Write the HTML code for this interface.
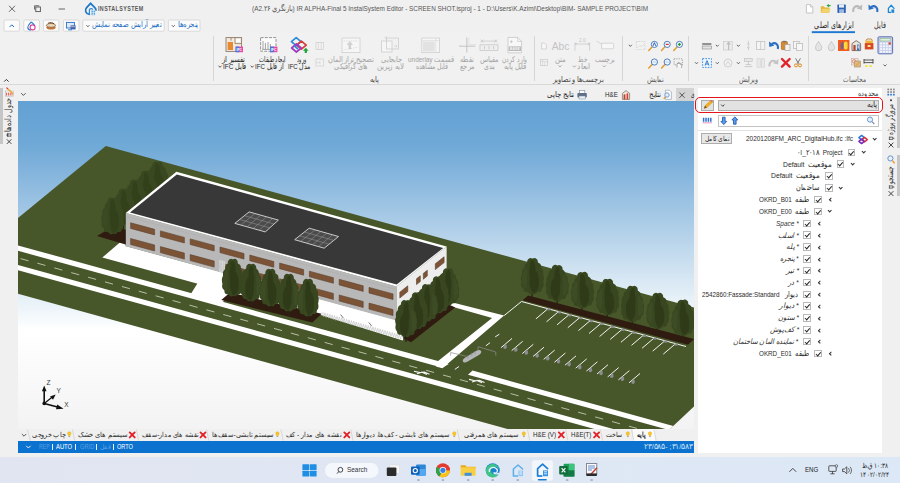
<!DOCTYPE html>
<html lang="fa">
<head>
<meta charset="utf-8">
<title>InstalSystem Editor</title>
<style>
*{box-sizing:border-box;margin:0;padding:0}
html,body{width:900px;height:483px;overflow:hidden;background:#f0f0f0}
body{font-family:"Liberation Sans",sans-serif;font-size:8px;color:#333;position:relative}
.abs{position:absolute}
.t{position:absolute;white-space:nowrap;line-height:1}
.rtl{direction:rtl;unicode-bidi:isolate}
.f{transform-origin:0 0;display:inline-block}
#titlebar{left:0;top:0;width:900px;height:18px;background:#f0f0f0}
#row2{left:0;top:18px;width:900px;height:15px;background:#f0f0f0}
#ribbon{left:0;top:33px;width:900px;height:51px;background:#f1f1f1}
#ribline{left:0;top:84px;width:900px;height:1px;background:#d9d9d9}
#tabrow{left:0;top:85px;width:697px;height:16px;background:#f0f0f0}
#leftstrip{left:0;top:85px;width:18px;height:372px;background:#f0f0f0}
#leftedge{left:0;top:88px;width:3px;height:33px;background:#c9c9c9}
#rpanel{left:697.5px;top:88.4px;width:184px;height:364.8px;background:#fff}
#rstrip{left:881.5px;top:85px;width:18.5px;height:372px;background:#f0f0f0}
#btabs{left:18px;top:429px;width:676px;height:12px;background:#f0f0f0}
#status{left:18px;top:440.6px;width:676px;height:12.8px;background:#0b73cf}
#taskbar{left:0;top:457px;width:900px;height:26px;background:linear-gradient(90deg,#e1e5f1,#dfe7f4 60%,#dce8f6)}
.qb{position:absolute;top:20px;height:12px;border:1px solid #d3d3d3;background:#fbfbfb;border-radius:1px}
.blue{color:#1b6ec2}
.sep{position:absolute;top:36px;width:1px;height:45px;background:#d6d6d6}
.gl{position:absolute;top:75.5px;font-size:7.5px;color:#555;white-space:nowrap;line-height:1;direction:rtl}
.rl{position:absolute;font-size:7.5px;line-height:7.5px;color:#9a9a9a;text-align:center;white-space:nowrap;direction:rtl}
.rl.on{color:#222}
.row{position:absolute;right:0;height:12px;white-space:nowrap;font-size:7.6px;line-height:12px;color:#2a2a2a}
.cb{position:absolute;width:7.6px;height:7.6px;border:1px solid #b9b9b9;background:#fff}
.cb:after{content:"";position:absolute;left:1.7px;top:0px;width:1.8px;height:3.6px;border:solid #222;border-width:0 1px 1px 0;transform:rotate(42deg)}
.car{position:absolute;width:3.4px;height:3.4px;border:solid #333;border-width:0 0.9px 0.9px 0}
.car.d{transform:rotate(45deg)}
.car.r{transform:rotate(135deg)}
.lbl{position:absolute;white-space:nowrap;font-size:7.6px;line-height:10px;color:#2a2a2a}
.bt{position:absolute;top:430.5px;height:10px;font-size:7.4px;line-height:10px;color:#2a2a2a;white-space:nowrap;direction:rtl}
.bsep{position:absolute;top:430px;width:1px;height:10px;background:#cfcfcf}
</style>
</head>
<body>
<div class="abs" id="titlebar"></div>
<div class="abs" id="row2"></div>
<div class="abs" id="ribbon"></div>
<div class="abs" id="ribline"></div>
<div class="abs" id="tabrow"></div>
<div class="abs" id="leftstrip"></div>
<div class="abs" id="leftedge"></div>
<div class="abs" id="rstrip"></div>
<div class="abs" id="rpanel"></div>
<div class="abs" id="btabs"></div>
<div class="abs" id="status"></div>
<div class="abs" id="taskbar"></div>
<svg id="scene" width="900" height="483" viewBox="0 0 900 483" style="position:absolute;left:0;top:0"><defs><linearGradient id="sky" x1="0" y1="101" x2="0" y2="429" gradientUnits="userSpaceOnUse"><stop offset="0" stop-color="#64a1d3"/><stop offset="0.08" stop-color="#69a5d5"/><stop offset="0.14" stop-color="#71aad7"/><stop offset="0.195" stop-color="#7eb1db"/><stop offset="0.30" stop-color="#99c1e2"/><stop offset="0.454" stop-color="#c0d9ed"/><stop offset="0.607" stop-color="#e7f1f8"/><stop offset="0.70" stop-color="#ffffff"/><stop offset="1" stop-color="#f3f3f3"/></linearGradient><clipPath id="vp"><rect x="18" y="101" width="676" height="328"/></clipPath></defs><rect x="18" y="101" width="676" height="328" fill="url(#sky)"/><g clip-path="url(#vp)"><polygon points="105.8,146.1 694,307.6 694,406.5 670,429 507.5,429 18,293.7 18,218" fill="#48572a"/><polygon points="18,265 700,452.9 700,458.1 18,270.2" fill="#ffffff"/><polygon points="18,245.4 448.8,364.1 442.4,367.7 18,250.8" fill="#ffffff"/><polygon points="472.5,370.6 673.3,425.9 669,430 468,374.8" fill="#ffffff"/><path d="M20.5 258.6L28.5 260.8M37.4 263.2L45.4 265.4M54.3 267.9L62.3 270.1M71.2 272.6L79.2 274.8M88.1 277.2L96.1 279.4M105 281.9L113 284.1M121.9 286.5L129.9 288.7M138.8 291.2L146.8 293.4M155.7 295.8L163.7 298M172.6 300.5L180.6 302.7M189.5 305.1L197.5 307.4M206.4 309.8L214.4 312M223.3 314.5L231.3 316.7M240.2 319.1L248.2 321.3M257.1 323.8L265.1 326M274 328.4L282 330.6M290.9 333.1L298.9 335.3M307.8 337.7L315.8 339.9M324.7 342.4L332.7 344.6M341.6 347.1L349.6 349.3M358.5 351.7L366.5 353.9M375.4 356.4L383.4 358.6M392.3 361L400.3 363.2M409.2 365.7L417.2 367.9M426.1 370.3L434.1 372.5M443 375L451 377.2M459.9 379.6L467.9 381.8M476.8 384.3L484.8 386.5M493.7 389L501.7 391.2M510.6 393.6L518.6 395.8M527.5 398.3L535.5 400.5M544.4 402.9L552.4 405.1M561.3 407.6L569.3 409.8M578.2 412.2L586.2 414.4M595.1 416.9L603.1 419.1M612 421.5L620 423.8M628.9 426.2L636.9 428.4M645.8 430.9L653.8 433.1M662.7 435.5L670.7 437.7M679.6 440.2L687.6 442.4" stroke="#d3d9c4" stroke-width="0.8" fill="none"/><polygon points="102.3,257.6 119.5,242.7 125.6,239.9 125.6,246 397,320.1 412,312 402.7,340.4 321.7,315.2 230,292.6 199.6,284.2" fill="#ffffff"/><polygon points="198,282.5 232,291.5 222,303 190.5,294.5" fill="#ffffff"/><polygon points="449.7,301.7 504.1,315.6 442.4,368.3 436,366.6 438.1,361.1 492.1,317.9 449.7,305.9" fill="#ffffff"/><path d="M504.1 315.6L521.5 301.5L686 346.5" stroke="#f4f4f0" stroke-width="1" fill="none"/><path d="M535.9 318.9l11.8 -10M546.5 321.8l11.8 -10M557.1 324.8l11.8 -10M567.8 327.7l11.8 -10M578.4 330.6l11.8 -10M589 333.5l11.8 -10M599.6 336.5l11.8 -10M610.2 339.4l11.8 -10M620.9 342.3l11.8 -10M631.5 345.3l11.8 -10M642.1 348.2l11.8 -10M652.7 351.1l11.8 -10M663.3 354.1l11.8 -10M501 347.7l11 -9.3M511.7 350.6l11 -9.3M522.3 353.6l11 -9.3M533 356.5l11 -9.3M543.7 359.4l11 -9.3M554.4 362.3l11 -9.3M565 365.2l11 -9.3M575.7 368.2l11 -9.3M586.4 371.1l11 -9.3M597 374l11 -9.3M607.7 376.9l11 -9.3M618.4 379.9l11 -9.3M629 382.8l11 -9.3" stroke="#f2f2ee" stroke-width="1" fill="none"/><g fill="#8b8d92"><path d="M503.4 346.7l1.6 -2.4l1.5 .5l.4 2.6l-1.3 1.5l-1.9 -.4z"/><path d="M514.1 349.6l1.6 -2.4l1.5 .5l.4 2.6l-1.3 1.5l-1.9 -.4z"/><path d="M524.7 352.6l1.6 -2.4l1.5 .5l.4 2.6l-1.3 1.5l-1.9 -.4z"/><path d="M535.4 355.5l1.6 -2.4l1.5 .5l.4 2.6l-1.3 1.5l-1.9 -.4z"/><path d="M546.1 358.4l1.6 -2.4l1.5 .5l.4 2.6l-1.3 1.5l-1.9 -.4z"/><path d="M556.8 361.3l1.6 -2.4l1.5 .5l.4 2.6l-1.3 1.5l-1.9 -.4z"/><path d="M567.4 364.2l1.6 -2.4l1.5 .5l.4 2.6l-1.3 1.5l-1.9 -.4z"/><path d="M578.1 367.2l1.6 -2.4l1.5 .5l.4 2.6l-1.3 1.5l-1.9 -.4z"/><path d="M588.8 370.1l1.6 -2.4l1.5 .5l.4 2.6l-1.3 1.5l-1.9 -.4z"/><path d="M599.4 373l1.6 -2.4l1.5 .5l.4 2.6l-1.3 1.5l-1.9 -.4z"/><path d="M610.1 375.9l1.6 -2.4l1.5 .5l.4 2.6l-1.3 1.5l-1.9 -.4z"/><path d="M620.8 378.9l1.6 -2.4l1.5 .5l.4 2.6l-1.3 1.5l-1.9 -.4z"/><path d="M631.4 381.8l1.6 -2.4l1.5 .5l.4 2.6l-1.3 1.5l-1.9 -.4z"/><ellipse cx="548.9" cy="309.3" rx="1.8" ry="1.2"/><ellipse cx="559.5" cy="312.2" rx="1.8" ry="1.2"/><ellipse cx="570.1" cy="315.2" rx="1.8" ry="1.2"/><ellipse cx="580.8" cy="318.1" rx="1.8" ry="1.2"/><ellipse cx="591.4" cy="321" rx="1.8" ry="1.2"/><ellipse cx="602" cy="323.9" rx="1.8" ry="1.2"/><ellipse cx="612.6" cy="326.9" rx="1.8" ry="1.2"/><ellipse cx="623.2" cy="329.8" rx="1.8" ry="1.2"/><ellipse cx="633.9" cy="332.7" rx="1.8" ry="1.2"/><ellipse cx="644.5" cy="335.7" rx="1.8" ry="1.2"/><ellipse cx="655.1" cy="338.6" rx="1.8" ry="1.2"/><ellipse cx="665.7" cy="341.5" rx="1.8" ry="1.2"/><ellipse cx="676.3" cy="344.5" rx="1.8" ry="1.2"/></g><path d="M454.8 369.4L459 366.5M485.9 345.8L490 342.7M495.2 336.9L499.4 334.2M465 361.5L469 358.6" stroke="#eef0ea" stroke-width="1" fill="none"/><polygon points="97,236 113,226.5 168,241 125.6,244.5" fill="#2f1b10"/><path d="M157 195.6v8" stroke="#2a2313" stroke-width="1.3"/><path d="M158.4 161.7Q159.5 161.2 160.5 161.7Q161.6 162.2 162.2 163.2Q162.8 164.2 162.7 165.2Q162.6 166.3 163.7 166.7Q164.7 167.1 165.4 168.2Q166.1 169.3 166 170.5Q165.9 171.7 166.7 172.4Q167.5 173.2 167.9 174.5Q168.3 175.8 168 177Q167.7 178.2 168.3 179.2Q168.8 180.3 168.7 181.9Q168.6 183.5 168.3 184.6Q167.9 185.7 168.3 186.8Q168.6 188 168.4 189.5Q168.1 191 167.3 191.8Q166.5 192.6 166.6 193.6Q166.7 194.6 165.6 195.4Q164.5 196.1 163.5 195.9Q162.4 195.7 161.9 196.7Q161.4 197.7 160.2 198Q159.1 198.3 158.5 197.8Q157.9 197.3 157 198Q156.1 198.7 155.1 198.1Q154 197.5 153.4 196.7Q152.8 195.9 151.6 196.1Q150.5 196.3 149.6 195.4Q148.7 194.4 148.8 193.3Q148.9 192.2 147.9 191.6Q146.9 191 146.5 189.6Q146.1 188.2 146.5 186.8Q146.9 185.5 146.4 184.4Q146 183.3 146.1 181.6Q146.3 179.8 146.9 178.8Q147.5 177.8 147.2 176.6Q146.9 175.4 147.5 174.1Q148.1 172.8 148.9 172.2Q149.7 171.7 149.6 170.4Q149.5 169.1 150.3 168.1Q151 167.1 151.7 166.8Q152.4 166.5 152.3 165.2Q152.2 164 153 163.1Q153.8 162.2 154.8 161.8Q155.7 161.4 156.5 161.8Q157.3 162.2 158.4 161.7Z" fill="#394820"/><path d="M151.4 170.7Q147 175.8 146.7 183.9Q147.5 191 151.4 193Q152.9 185.9 151.9 179.8Q153.4 173.8 151.4 170.7Z" fill="#3b4a22"/><path d="M157.3 163.1Q160.8 166.7 160.2 173.8Q164.6 178.8 163.7 188Q164.1 194 158.3 197.6Q153.9 192 154.9 183.9Q153.6 174.8 155.3 168.7Q154.4 164.6 157.3 163.1Z" fill="#33411b"/><path d="M145.8 204.6v8" stroke="#2a2313" stroke-width="1.3"/><path d="M147.2 170.7Q148.3 170.2 149.3 170.7Q150.4 171.2 151 172.2Q151.6 173.2 151.5 174.2Q151.4 175.3 152.5 175.7Q153.5 176.1 154.2 177.2Q154.9 178.3 154.8 179.5Q154.7 180.7 155.5 181.4Q156.3 182.2 156.7 183.5Q157.1 184.8 156.8 186Q156.5 187.2 157.1 188.2Q157.6 189.3 157.5 190.9Q157.4 192.5 157.1 193.6Q156.7 194.7 157.1 195.8Q157.4 197 157.2 198.5Q156.9 200 156.1 200.8Q155.3 201.6 155.4 202.6Q155.5 203.6 154.4 204.4Q153.3 205.1 152.3 204.9Q151.2 204.7 150.7 205.7Q150.2 206.7 149 207Q147.9 207.3 147.3 206.8Q146.7 206.3 145.8 207Q144.9 207.7 143.8 207.1Q142.8 206.5 142.2 205.7Q141.6 204.9 140.4 205.1Q139.3 205.3 138.4 204.4Q137.5 203.4 137.6 202.3Q137.7 201.2 136.7 200.6Q135.7 200 135.3 198.6Q134.9 197.2 135.3 195.8Q135.7 194.5 135.2 193.4Q134.8 192.3 134.9 190.6Q135.1 188.8 135.7 187.8Q136.3 186.8 136 185.6Q135.7 184.4 136.3 183.1Q136.9 181.8 137.7 181.2Q138.5 180.7 138.4 179.4Q138.3 178.1 139.1 177.1Q139.8 176.1 140.5 175.8Q141.2 175.5 141.1 174.2Q141 173 141.8 172.1Q142.6 171.2 143.6 170.8Q144.5 170.4 145.3 170.8Q146.1 171.2 147.2 170.7Z" fill="#394820"/><path d="M140.2 179.7Q135.8 184.8 135.5 192.9Q136.3 200 140.2 202Q141.7 194.9 140.7 188.8Q142.2 182.8 140.2 179.7Z" fill="#3b4a22"/><path d="M146.1 172.1Q149.6 175.7 149 182.8Q153.4 187.8 152.5 197Q152.9 203 147.1 206.6Q142.7 201 143.7 192.9Q142.4 183.8 144.1 177.7Q143.2 173.6 146.1 172.1Z" fill="#33411b"/><path d="M134.6 213.6v8" stroke="#2a2313" stroke-width="1.3"/><path d="M136 179.7Q137.1 179.2 138.1 179.7Q139.2 180.2 139.8 181.2Q140.4 182.2 140.3 183.2Q140.2 184.3 141.3 184.7Q142.3 185.1 143 186.2Q143.7 187.3 143.6 188.5Q143.5 189.7 144.3 190.4Q145.1 191.2 145.5 192.5Q145.9 193.8 145.6 195Q145.3 196.2 145.9 197.2Q146.4 198.3 146.3 199.9Q146.2 201.5 145.9 202.6Q145.5 203.7 145.9 204.8Q146.2 206 146 207.5Q145.7 209 144.9 209.8Q144.1 210.6 144.2 211.6Q144.3 212.6 143.2 213.4Q142.1 214.1 141.1 213.9Q140 213.7 139.5 214.7Q139 215.7 137.8 216Q136.7 216.3 136.1 215.8Q135.5 215.3 134.6 216Q133.7 216.7 132.7 216.1Q131.6 215.5 131 214.7Q130.4 213.9 129.2 214.1Q128.1 214.3 127.2 213.4Q126.3 212.4 126.4 211.3Q126.5 210.2 125.5 209.6Q124.5 209 124.1 207.6Q123.7 206.2 124.1 204.8Q124.5 203.5 124 202.4Q123.6 201.3 123.7 199.6Q123.9 197.8 124.5 196.8Q125.1 195.8 124.8 194.6Q124.5 193.4 125.1 192.1Q125.7 190.8 126.5 190.2Q127.3 189.7 127.2 188.4Q127.1 187.1 127.9 186.1Q128.6 185.1 129.3 184.8Q130 184.5 129.9 183.2Q129.8 182 130.6 181.1Q131.4 180.2 132.4 179.8Q133.3 179.4 134.1 179.8Q134.9 180.2 136 179.7Z" fill="#394820"/><path d="M129 188.7Q124.6 193.8 124.3 201.9Q125.1 209 129 211Q130.5 203.9 129.5 197.8Q131 191.8 129 188.7Z" fill="#3b4a22"/><path d="M134.9 181.1Q138.4 184.7 137.8 191.8Q142.2 196.8 141.3 206Q141.7 212 135.9 215.6Q131.5 210 132.5 201.9Q131.2 192.8 132.9 186.7Q132 182.6 134.9 181.1Z" fill="#33411b"/><path d="M123.4 222.6v8" stroke="#2a2313" stroke-width="1.3"/><path d="M124.8 188.7Q125.9 188.2 126.9 188.7Q128 189.2 128.6 190.2Q129.2 191.2 129.1 192.2Q129 193.3 130.1 193.7Q131.1 194.1 131.8 195.2Q132.5 196.3 132.4 197.5Q132.3 198.7 133.1 199.4Q133.9 200.2 134.3 201.5Q134.7 202.8 134.4 204Q134.1 205.2 134.7 206.2Q135.2 207.3 135.1 208.9Q135 210.5 134.7 211.6Q134.3 212.7 134.7 213.8Q135 215 134.8 216.5Q134.5 218 133.7 218.8Q132.9 219.6 133 220.6Q133.1 221.6 132 222.4Q130.9 223.1 129.9 222.9Q128.8 222.7 128.3 223.7Q127.8 224.7 126.6 225Q125.5 225.3 124.9 224.8Q124.3 224.3 123.4 225Q122.5 225.7 121.5 225.1Q120.4 224.5 119.8 223.7Q119.2 222.9 118 223.1Q116.9 223.3 116 222.4Q115.1 221.4 115.2 220.3Q115.3 219.2 114.3 218.6Q113.3 218 112.9 216.6Q112.5 215.2 112.9 213.8Q113.3 212.5 112.8 211.4Q112.4 210.3 112.5 208.6Q112.7 206.8 113.3 205.8Q113.9 204.8 113.6 203.6Q113.3 202.4 113.9 201.1Q114.5 199.8 115.3 199.2Q116.1 198.7 116 197.4Q115.9 196.1 116.7 195.1Q117.4 194.1 118.1 193.8Q118.8 193.5 118.7 192.2Q118.6 191 119.4 190.1Q120.2 189.2 121.2 188.8Q122.1 188.4 122.9 188.8Q123.7 189.2 124.8 188.7Z" fill="#394820"/><path d="M117.8 197.7Q113.4 202.8 113.1 210.9Q113.9 218 117.8 220Q119.3 212.9 118.3 206.8Q119.8 200.8 117.8 197.7Z" fill="#3b4a22"/><path d="M123.7 190.1Q127.2 193.7 126.6 200.8Q131 205.8 130.1 215Q130.5 221 124.7 224.6Q120.3 219 121.3 210.9Q120 201.8 121.7 195.7Q120.8 191.6 123.7 190.1Z" fill="#33411b"/><path d="M112.2 231.6v8" stroke="#2a2313" stroke-width="1.3"/><path d="M113.6 197.7Q114.7 197.2 115.7 197.7Q116.8 198.2 117.4 199.2Q118 200.2 117.9 201.2Q117.8 202.3 118.9 202.7Q119.9 203.1 120.6 204.2Q121.3 205.3 121.2 206.5Q121.1 207.7 121.9 208.4Q122.7 209.2 123.1 210.5Q123.5 211.8 123.2 213Q122.9 214.2 123.5 215.2Q124 216.3 123.9 217.9Q123.8 219.5 123.5 220.6Q123.1 221.7 123.5 222.8Q123.8 224 123.6 225.5Q123.3 227 122.5 227.8Q121.7 228.6 121.8 229.6Q121.9 230.6 120.8 231.4Q119.7 232.1 118.7 231.9Q117.6 231.7 117.1 232.7Q116.6 233.7 115.4 234Q114.3 234.3 113.7 233.8Q113.1 233.3 112.2 234Q111.3 234.7 110.2 234.1Q109.2 233.5 108.6 232.7Q108 231.9 106.8 232.1Q105.7 232.3 104.8 231.4Q103.9 230.4 104 229.3Q104.1 228.2 103.1 227.6Q102.1 227 101.7 225.6Q101.3 224.2 101.7 222.8Q102.1 221.5 101.6 220.4Q101.2 219.3 101.3 217.6Q101.5 215.8 102.1 214.8Q102.7 213.8 102.4 212.6Q102.1 211.4 102.7 210.1Q103.3 208.8 104.1 208.2Q104.9 207.7 104.8 206.4Q104.7 205.1 105.5 204.1Q106.2 203.1 106.9 202.8Q107.6 202.5 107.5 201.2Q107.4 200 108.2 199.1Q109 198.2 110 197.8Q110.9 197.4 111.7 197.8Q112.5 198.2 113.6 197.7Z" fill="#394820"/><path d="M106.6 206.7Q102.2 211.8 101.9 219.9Q102.7 227 106.6 229Q108.1 221.9 107.1 215.8Q108.6 209.8 106.6 206.7Z" fill="#3b4a22"/><path d="M112.5 199.1Q116 202.7 115.4 209.8Q119.8 214.8 118.9 224Q119.3 230 113.5 233.6Q109.1 228 110.1 219.9Q108.8 210.8 110.5 204.7Q109.6 200.6 112.5 199.1Z" fill="#33411b"/><polygon points="522.6,300.2 528.1,295.6 694.2,339 688,344.8" fill="#2f1b10"/><path d="M532 291.6v8" stroke="#2a2313" stroke-width="1.3"/><path d="M533.4 258.2Q534.5 257.7 535.6 258.2Q536.7 258.7 537.3 259.7Q537.9 260.7 537.8 261.7Q537.7 262.7 538.8 263.1Q539.9 263.5 540.6 264.6Q541.3 265.7 541.2 266.9Q541.1 268.1 541.9 268.8Q542.7 269.5 543.1 270.8Q543.5 272.1 543.2 273.3Q542.9 274.5 543.5 275.5Q544.1 276.5 544 278.1Q543.9 279.7 543.5 280.8Q543.1 281.9 543.5 283Q543.9 284.1 543.6 285.6Q543.3 287.1 542.5 287.9Q541.7 288.7 541.8 289.7Q541.9 290.7 540.8 291.4Q539.7 292.1 538.6 291.9Q537.5 291.7 537 292.7Q536.5 293.7 535.3 294Q534.1 294.3 533.5 293.8Q532.9 293.3 532 294Q531.1 294.7 530 294.1Q528.9 293.5 528.3 292.7Q527.7 291.9 526.5 292.1Q525.3 292.3 524.4 291.4Q523.5 290.5 523.6 289.4Q523.7 288.3 522.7 287.7Q521.7 287.1 521.3 285.7Q520.9 284.3 521.3 283Q521.7 281.7 521.2 280.6Q520.7 279.5 520.9 277.8Q521.1 276.1 521.7 275.1Q522.3 274.1 522 272.9Q521.7 271.7 522.3 270.4Q522.9 269.1 523.7 268.6Q524.5 268.1 524.4 266.8Q524.3 265.5 525.1 264.5Q525.9 263.5 526.6 263.2Q527.3 262.9 527.2 261.7Q527.1 260.5 527.9 259.6Q528.7 258.7 529.7 258.3Q530.7 257.9 531.5 258.3Q532.3 258.7 533.4 258.2Z" fill="#384720"/><path d="M526.3 267.1Q521.8 272.1 521.5 280.1Q522.3 287.1 526.3 289.1Q527.8 282.1 526.8 276.1Q528.3 270.1 526.3 267.1Z" fill="#3d4c25"/><path d="M532.3 259.6Q535.9 263.1 535.3 270.1Q539.8 275.1 538.8 284.1Q539.3 290.1 533.3 293.6Q528.8 288.1 529.8 280.1Q528.5 271.1 530.3 265.1Q529.3 261.1 532.3 259.6Z" fill="#2f3b18"/><path d="M557.1 298.5v8" stroke="#2a2313" stroke-width="1.3"/><path d="M556.3 265.1Q555.2 264.6 554.1 265.1Q553 265.6 552.4 266.6Q551.8 267.6 551.9 268.6Q552 269.6 550.9 270Q549.8 270.4 549.1 271.5Q548.4 272.6 548.5 273.8Q548.6 275 547.8 275.7Q547 276.4 546.6 277.7Q546.2 279 546.5 280.2Q546.8 281.4 546.2 282.4Q545.6 283.4 545.7 285Q545.8 286.6 546.2 287.7Q546.6 288.8 546.2 289.9Q545.8 291 546.1 292.5Q546.4 294 547.2 294.8Q548 295.6 547.9 296.6Q547.8 297.6 548.9 298.3Q550 299 551.1 298.8Q552.2 298.6 552.7 299.6Q553.2 300.6 554.4 300.9Q555.6 301.2 556.2 300.7Q556.8 300.2 557.7 300.9Q558.6 301.6 559.7 301Q560.8 300.4 561.4 299.6Q562 298.8 563.2 299Q564.4 299.2 565.3 298.3Q566.2 297.4 566.1 296.3Q566 295.2 567 294.6Q568 294 568.4 292.6Q568.8 291.2 568.4 289.9Q568 288.6 568.5 287.5Q569 286.4 568.8 284.7Q568.6 283 568 282Q567.4 281 567.7 279.8Q568 278.6 567.4 277.3Q566.8 276 566 275.5Q565.2 275 565.3 273.7Q565.4 272.4 564.6 271.4Q563.8 270.4 563.1 270.1Q562.4 269.8 562.5 268.6Q562.6 267.4 561.8 266.5Q561 265.6 560 265.2Q559 264.8 558.2 265.2Q557.4 265.6 556.3 265.1Z" fill="#384720"/><path d="M563.4 274Q567.9 279 568.2 287Q567.4 294 563.4 296Q561.9 289 562.9 283Q561.4 277 563.4 274Z" fill="#3d4c25"/><path d="M557.4 266.5Q553.8 270 554.4 277Q549.9 282 550.9 291Q550.4 297 556.4 300.5Q560.9 295 559.9 287Q561.2 278 559.4 272Q560.4 268 557.4 266.5Z" fill="#2f3b18"/><path d="M582.1 305.5v8" stroke="#2a2313" stroke-width="1.3"/><path d="M583.5 272.1Q584.6 271.6 585.7 272.1Q586.8 272.6 587.4 273.6Q588 274.6 587.9 275.6Q587.8 276.6 588.9 277Q590 277.4 590.7 278.5Q591.4 279.6 591.3 280.8Q591.2 282 592 282.7Q592.8 283.4 593.2 284.7Q593.6 286 593.3 287.2Q593 288.4 593.6 289.4Q594.2 290.4 594.1 292Q594 293.6 593.6 294.7Q593.2 295.8 593.6 296.9Q594 298 593.7 299.5Q593.4 301 592.6 301.8Q591.8 302.6 591.9 303.6Q592 304.6 590.9 305.3Q589.8 306 588.7 305.8Q587.6 305.6 587.1 306.6Q586.6 307.6 585.4 307.9Q584.2 308.2 583.6 307.7Q583 307.2 582.1 307.9Q581.2 308.6 580.1 308Q579 307.4 578.4 306.6Q577.8 305.8 576.6 306Q575.4 306.2 574.5 305.3Q573.6 304.4 573.7 303.3Q573.8 302.2 572.8 301.6Q571.8 301 571.4 299.6Q571 298.2 571.4 296.9Q571.8 295.6 571.3 294.5Q570.8 293.4 571 291.7Q571.2 290 571.8 289Q572.4 288 572.1 286.8Q571.8 285.6 572.4 284.3Q573 283 573.8 282.5Q574.6 282 574.5 280.7Q574.4 279.4 575.2 278.4Q576 277.4 576.7 277.1Q577.4 276.8 577.3 275.6Q577.2 274.4 578 273.5Q578.8 272.6 579.8 272.2Q580.8 271.8 581.6 272.2Q582.4 272.6 583.5 272.1Z" fill="#384720"/><path d="M576.4 281Q571.9 286 571.6 294Q572.4 301 576.4 303Q577.9 296 576.9 290Q578.4 284 576.4 281Z" fill="#3d4c25"/><path d="M582.4 273.5Q586 277 585.4 284Q589.9 289 588.9 298Q589.4 304 583.4 307.5Q578.9 302 579.9 294Q578.6 285 580.4 279Q579.4 275 582.4 273.5Z" fill="#2f3b18"/><path d="M607.2 312.4v8" stroke="#2a2313" stroke-width="1.3"/><path d="M608.6 279Q609.7 278.5 610.8 279Q611.9 279.5 612.5 280.5Q613.1 281.5 613 282.5Q612.9 283.5 614 283.9Q615.1 284.3 615.8 285.4Q616.5 286.5 616.4 287.7Q616.3 288.9 617.1 289.6Q617.9 290.3 618.3 291.6Q618.7 292.9 618.4 294.1Q618.1 295.3 618.7 296.3Q619.3 297.3 619.2 298.9Q619.1 300.5 618.7 301.6Q618.3 302.7 618.7 303.8Q619.1 304.9 618.8 306.4Q618.5 307.9 617.7 308.7Q616.9 309.5 617 310.5Q617.1 311.5 616 312.2Q614.9 312.9 613.8 312.7Q612.7 312.5 612.2 313.5Q611.7 314.5 610.5 314.8Q609.3 315.1 608.7 314.6Q608.1 314.1 607.2 314.8Q606.3 315.5 605.2 314.9Q604.1 314.3 603.5 313.5Q602.9 312.7 601.7 312.9Q600.5 313.1 599.6 312.2Q598.7 311.3 598.8 310.2Q598.9 309.1 597.9 308.5Q596.9 307.9 596.5 306.5Q596.1 305.1 596.5 303.8Q596.9 302.5 596.4 301.4Q595.9 300.3 596.1 298.6Q596.3 296.9 596.9 295.9Q597.5 294.9 597.2 293.7Q596.9 292.5 597.5 291.2Q598.1 289.9 598.9 289.4Q599.7 288.9 599.6 287.6Q599.5 286.3 600.3 285.3Q601.1 284.3 601.8 284Q602.5 283.7 602.4 282.5Q602.3 281.3 603.1 280.4Q603.9 279.5 604.9 279.1Q605.9 278.7 606.7 279.1Q607.5 279.5 608.6 279Z" fill="#384720"/><path d="M601.5 287.9Q597 292.9 596.7 300.9Q597.5 307.9 601.5 309.9Q603 302.9 602 296.9Q603.5 290.9 601.5 287.9Z" fill="#3d4c25"/><path d="M607.5 280.4Q611.1 283.9 610.5 290.9Q615 295.9 614 304.9Q614.5 310.9 608.5 314.4Q604 308.9 605 300.9Q603.7 291.9 605.5 285.9Q604.5 281.9 607.5 280.4Z" fill="#2f3b18"/><path d="M632.3 319.3v8" stroke="#2a2313" stroke-width="1.3"/><path d="M631.5 285.9Q630.4 285.4 629.3 285.9Q628.2 286.4 627.6 287.4Q627 288.4 627.1 289.4Q627.2 290.4 626.1 290.8Q625 291.2 624.3 292.3Q623.6 293.4 623.7 294.6Q623.8 295.8 623 296.5Q622.2 297.2 621.8 298.5Q621.4 299.8 621.7 301Q622 302.2 621.4 303.2Q620.8 304.2 620.9 305.8Q621 307.4 621.4 308.5Q621.8 309.6 621.4 310.7Q621 311.8 621.3 313.3Q621.6 314.8 622.4 315.6Q623.2 316.4 623.1 317.4Q623 318.4 624.1 319.1Q625.2 319.8 626.3 319.6Q627.4 319.4 627.9 320.4Q628.4 321.4 629.6 321.7Q630.8 322 631.4 321.5Q632 321 632.9 321.7Q633.8 322.4 634.9 321.8Q636 321.2 636.6 320.4Q637.2 319.6 638.4 319.8Q639.6 320 640.5 319.1Q641.4 318.2 641.3 317.1Q641.2 316 642.2 315.4Q643.2 314.8 643.6 313.4Q644 312 643.6 310.7Q643.2 309.4 643.7 308.3Q644.2 307.2 644 305.5Q643.8 303.8 643.2 302.8Q642.6 301.8 642.9 300.6Q643.2 299.4 642.6 298.1Q642 296.8 641.2 296.3Q640.4 295.8 640.5 294.5Q640.6 293.2 639.8 292.2Q639 291.2 638.3 290.9Q637.6 290.6 637.7 289.4Q637.8 288.2 637 287.3Q636.2 286.4 635.2 286Q634.2 285.6 633.4 286Q632.6 286.4 631.5 285.9Z" fill="#384720"/><path d="M638.6 294.8Q643.1 299.8 643.4 307.8Q642.6 314.8 638.6 316.8Q637.1 309.8 638.1 303.8Q636.6 297.8 638.6 294.8Z" fill="#3d4c25"/><path d="M632.6 287.3Q629 290.8 629.6 297.8Q625.1 302.8 626.1 311.8Q625.6 317.8 631.6 321.3Q636.1 315.8 635.1 307.8Q636.4 298.8 634.6 292.8Q635.6 288.8 632.6 287.3Z" fill="#2f3b18"/><path d="M657.4 326.2v8" stroke="#2a2313" stroke-width="1.3"/><path d="M658.8 292.9Q659.9 292.4 660.9 292.9Q662 293.4 662.6 294.4Q663.2 295.4 663.1 296.4Q663 297.4 664.1 297.8Q665.2 298.1 665.9 299.2Q666.6 300.4 666.5 301.6Q666.4 302.8 667.2 303.4Q668 304.1 668.4 305.4Q668.9 306.8 668.5 307.9Q668.2 309.1 668.9 310.1Q669.4 311.1 669.4 312.8Q669.2 314.4 668.9 315.4Q668.4 316.6 668.9 317.6Q669.2 318.8 668.9 320.2Q668.6 321.8 667.9 322.6Q667 323.4 667.1 324.4Q667.2 325.4 666.1 326.1Q665 326.8 663.9 326.6Q662.9 326.4 662.4 327.4Q661.9 328.4 660.6 328.6Q659.4 328.9 658.9 328.4Q658.2 327.9 657.4 328.6Q656.4 329.4 655.4 328.8Q654.2 328.1 653.6 327.4Q653 326.6 651.9 326.8Q650.6 326.9 649.8 326.1Q648.9 325.1 648.9 324.1Q649 322.9 648 322.4Q647 321.8 646.6 320.4Q646.2 318.9 646.6 317.6Q647 316.4 646.5 315.2Q646 314.1 646.2 312.4Q646.4 310.8 647 309.8Q647.6 308.8 647.4 307.6Q647 306.4 647.6 305.1Q648.2 303.8 649 303.2Q649.9 302.8 649.8 301.4Q649.6 300.1 650.4 299.1Q651.2 298.1 651.9 297.9Q652.6 297.6 652.5 296.4Q652.4 295.1 653.2 294.2Q654 293.4 655 292.9Q656 292.6 656.9 292.9Q657.6 293.4 658.8 292.9Z" fill="#384720"/><path d="M651.6 301.8Q647.1 306.8 646.9 314.8Q647.6 321.8 651.6 323.8Q653.1 316.8 652.1 310.8Q653.6 304.8 651.6 301.8Z" fill="#3d4c25"/><path d="M657.6 294.2Q661.2 297.8 660.6 304.8Q665.1 309.8 664.1 318.8Q664.6 324.8 658.6 328.2Q654.1 322.8 655.1 314.8Q653.9 305.8 655.6 299.8Q654.6 295.8 657.6 294.2Z" fill="#2f3b18"/><path d="M682.4 333.2v8" stroke="#2a2313" stroke-width="1.3"/><path d="M683.8 299.8Q684.9 299.3 686 299.8Q687.1 300.3 687.7 301.3Q688.3 302.3 688.2 303.3Q688.1 304.3 689.2 304.7Q690.3 305.1 691 306.2Q691.7 307.3 691.6 308.5Q691.5 309.7 692.3 310.4Q693.1 311.1 693.5 312.4Q693.9 313.7 693.6 314.9Q693.3 316.1 693.9 317.1Q694.5 318.1 694.4 319.7Q694.3 321.3 693.9 322.4Q693.5 323.5 693.9 324.6Q694.3 325.7 694 327.2Q693.7 328.7 692.9 329.5Q692.1 330.3 692.2 331.3Q692.3 332.3 691.2 333Q690.1 333.7 689 333.5Q687.9 333.3 687.4 334.3Q686.9 335.3 685.7 335.6Q684.5 335.9 683.9 335.4Q683.3 334.9 682.4 335.6Q681.5 336.3 680.4 335.7Q679.3 335.1 678.7 334.3Q678.1 333.5 676.9 333.7Q675.7 333.9 674.8 333Q673.9 332.1 674 331Q674.1 329.9 673.1 329.3Q672.1 328.7 671.7 327.3Q671.3 325.9 671.7 324.6Q672.1 323.3 671.6 322.2Q671.1 321.1 671.3 319.4Q671.5 317.7 672.1 316.7Q672.7 315.7 672.4 314.5Q672.1 313.3 672.7 312Q673.3 310.7 674.1 310.2Q674.9 309.7 674.8 308.4Q674.7 307.1 675.5 306.1Q676.3 305.1 677 304.8Q677.7 304.5 677.6 303.3Q677.5 302.1 678.3 301.2Q679.1 300.3 680.1 299.9Q681.1 299.5 681.9 299.9Q682.7 300.3 683.8 299.8Z" fill="#384720"/><path d="M676.7 308.7Q672.2 313.7 671.9 321.7Q672.7 328.7 676.7 330.7Q678.2 323.7 677.2 317.7Q678.7 311.7 676.7 308.7Z" fill="#3d4c25"/><path d="M682.7 301.2Q686.3 304.7 685.7 311.7Q690.2 316.7 689.2 325.7Q689.7 331.7 683.7 335.2Q679.2 329.7 680.2 321.7Q678.9 312.7 680.7 306.7Q679.7 302.7 682.7 301.2Z" fill="#2f3b18"/><polygon points="125.8,213.1 396.5,286.4 396.5,320.4 125.8,246.2" fill="#b8b8b8"/><polygon points="396.5,286.4 446.6,246.4 446.6,281 396.5,320.4" fill="#ededed"/><polygon points="130.6,222.8 154.6,229.3 154.6,234.9 130.6,228.4" fill="#7b5337" stroke="#5f412a" stroke-width="0.6"/><polygon points="130.6,238.5 154.6,245 154.6,251 130.6,244.5" fill="#7b5337" stroke="#5f412a" stroke-width="0.6"/><polygon points="160.4,230.9 184.4,237.4 184.4,243 160.4,236.5" fill="#7b5337" stroke="#5f412a" stroke-width="0.6"/><polygon points="160.4,246.6 184.4,253.1 184.4,259.1 160.4,252.6" fill="#7b5337" stroke="#5f412a" stroke-width="0.6"/><polygon points="190.2,238.9 214.2,245.4 214.2,251 190.2,244.5" fill="#7b5337" stroke="#5f412a" stroke-width="0.6"/><polygon points="190.2,254.6 214.2,261.1 214.2,267.1 190.2,260.6" fill="#7b5337" stroke="#5f412a" stroke-width="0.6"/><polygon points="220,247 244,253.5 244,259.1 220,252.6" fill="#7b5337" stroke="#5f412a" stroke-width="0.6"/><polygon points="220,262.7 244,269.2 244,275.2 220,268.7" fill="#7b5337" stroke="#5f412a" stroke-width="0.6"/><polygon points="249.8,255.1 273.8,261.6 273.8,267.2 249.8,260.7" fill="#7b5337" stroke="#5f412a" stroke-width="0.6"/><polygon points="249.8,270.8 273.8,277.3 273.8,283.3 249.8,276.8" fill="#7b5337" stroke="#5f412a" stroke-width="0.6"/><polygon points="279.6,263.1 303.6,269.6 303.6,275.2 279.6,268.7" fill="#7b5337" stroke="#5f412a" stroke-width="0.6"/><polygon points="279.6,278.8 303.6,285.3 303.6,291.3 279.6,284.8" fill="#7b5337" stroke="#5f412a" stroke-width="0.6"/><polygon points="309.4,271.2 333.4,277.7 333.4,283.3 309.4,276.8" fill="#7b5337" stroke="#5f412a" stroke-width="0.6"/><polygon points="309.4,286.9 333.4,293.4 333.4,299.4 309.4,292.9" fill="#7b5337" stroke="#5f412a" stroke-width="0.6"/><polygon points="339.2,279.3 363.2,285.8 363.2,291.4 339.2,284.9" fill="#7b5337" stroke="#5f412a" stroke-width="0.6"/><polygon points="339.2,295 363.2,301.5 363.2,307.5 339.2,301" fill="#7b5337" stroke="#5f412a" stroke-width="0.6"/><polygon points="369,287.4 393,293.9 393,299.5 369,293" fill="#7b5337" stroke="#5f412a" stroke-width="0.6"/><polygon points="369,303.1 393,309.6 393,315.6 369,309.1" fill="#7b5337" stroke="#5f412a" stroke-width="0.6"/><polygon points="399.8,292.2 407.8,285.8 407.8,291.6 399.8,298" fill="#7b5337" stroke="#5f412a" stroke-width="0.6"/><polygon points="399.8,307.9 407.8,301.5 407.8,307.5 399.8,313.9" fill="#7b5337" stroke="#5f412a" stroke-width="0.6"/><polygon points="416.5,278.8 420.3,275.8 420.3,281.6 416.5,284.6" fill="#7b5337" stroke="#5f412a" stroke-width="0.6"/><polygon points="416.5,294.5 420.3,291.5 420.3,297.5 416.5,300.5" fill="#7b5337" stroke="#5f412a" stroke-width="0.6"/><polygon points="423.3,273.4 427.3,270.2 427.3,276 423.3,279.2" fill="#7b5337" stroke="#5f412a" stroke-width="0.6"/><polygon points="423.3,289.1 427.3,285.9 427.3,291.9 423.3,295.1" fill="#7b5337" stroke="#5f412a" stroke-width="0.6"/><polygon points="435.3,263.8 444.1,256.8 444.1,262.6 435.3,269.6" fill="#7b5337" stroke="#5f412a" stroke-width="0.6"/><polygon points="435.3,279.5 444.1,272.5 444.1,278.5 435.3,285.5" fill="#7b5337" stroke="#5f412a" stroke-width="0.6"/><path d="M125.8 216.2L396.5 289.5" stroke="#b0b0b0" stroke-width="0.8"/><polygon points="176.4,171.8 446.6,246.4 396.5,286.4 125.8,213.1" fill="#ffffff"/><polygon points="176.8,174.4 443.2,247.9 396.7,284.6 130,212.5" fill="#383838"/><polygon points="249.1,211.9 278.4,220.1 265.3,231.9 234.8,223.4" fill="#4b4b4b" stroke="#d9d9d9" stroke-width="0.9"/><path d="M255 213.5L240.9 225.1M260.8 215.2L247 226.8M266.7 216.8L253.1 228.5M272.5 218.5L259.2 230.2M244.4 215.7L274.1 224M239.7 219.5L269.8 227.9" stroke="#9a9a9a" stroke-width="0.5" fill="none"/><polygon points="309.2,228.2 338.5,236.5 324.2,248.2 294.7,239.7" fill="#4b4b4b" stroke="#d9d9d9" stroke-width="0.9"/><path d="M315.1 229.9L300.6 241.4M320.9 231.5L306.5 243.1M326.8 233.2L312.4 244.8M332.6 234.8L318.3 246.5M304.4 232L333.8 240.4M299.6 235.8L329.1 244.2" stroke="#9a9a9a" stroke-width="0.5" fill="none"/><path d="M219.6 260.4l5.4 1.5v11l-5.4 -1.5z" fill="#c9c9c9" stroke="#e2e2e2" stroke-width="0.6"/><path d="M222.3 261.2v11" stroke="#e2e2e2" stroke-width="0.5"/><path d="M322.6 312.2l1.2 4.6l1.2 -3.9M325 312.9l1.2 4.6l1.2 -3.9M327.4 313.6l1.2 4.6l1.2 -3.9M329.8 314.3l1.2 4.6l1.2 -3.9M332.2 315l1.2 4.6l1.2 -3.9M334.6 315.7l1.2 4.6l1.2 -3.9M337 316.4l1.2 4.6l1.2 -3.9M339.4 317.1l1.2 4.6l1.2 -3.9M341.8 317.8l1.2 4.6l1.2 -3.9M344.2 318.5l1.2 4.6l1.2 -3.9M346.6 319.2l1.2 4.6l1.2 -3.9M349 319.9l1.2 4.6l1.2 -3.9M351.4 320.6l1.2 4.6l1.2 -3.9M353.8 321.3l1.2 4.6l1.2 -3.9M356.2 322l1.2 4.6l1.2 -3.9M358.6 322.7l1.2 4.6l1.2 -3.9M361 323.4l1.2 4.6l1.2 -3.9M363.4 324.1l1.2 4.6l1.2 -3.9M365.8 324.8l1.2 4.6l1.2 -3.9M368.2 325.5l1.2 4.6l1.2 -3.9M370.6 326.2l1.2 4.6l1.2 -3.9M373 326.9l1.2 4.6l1.2 -3.9M375.4 327.6l1.2 4.6l1.2 -3.9M377.8 328.3l1.2 4.6l1.2 -3.9M380.2 329l1.2 4.6l1.2 -3.9M382.6 329.7l1.2 4.6l1.2 -3.9M385 330.4l1.2 4.6l1.2 -3.9M387.4 331.1l1.2 4.6l1.2 -3.9M389.8 331.8l1.2 4.6l1.2 -3.9M392.2 332.5l1.2 4.6l1.2 -3.9M394.6 333.2l1.2 4.6l1.2 -3.9M397 333.9l1.2 4.6l1.2 -3.9M399.4 334.5l1.2 4.6l1.2 -3.9" stroke="#bdbdbd" stroke-width="0.6" fill="none"/><path d="M340.6 314.6l2.8 3.6M368.8 322.4l2.8 3.6" stroke="#777" stroke-width="1"/><polygon points="221.3,300.1 230,292.6 321.7,313.8 312.4,322.6" fill="#2f1b10"/><path d="M232.3 293.8v7.5" stroke="#2a2313" stroke-width="1.3"/><path d="M233.6 258.9Q234.7 258.4 235.7 258.9Q236.7 259.4 237.3 260.5Q237.8 261.5 237.7 262.5Q237.6 263.6 238.7 264Q239.7 264.4 240.4 265.6Q241 266.7 240.9 268Q240.8 269.2 241.6 269.9Q242.3 270.7 242.7 272Q243.1 273.4 242.8 274.6Q242.5 275.9 243.1 276.9Q243.6 278 243.5 279.6Q243.4 281.3 243.1 282.4Q242.7 283.6 243.1 284.7Q243.4 285.9 243.2 287.4Q242.9 289 242.1 289.8Q241.4 290.7 241.5 291.7Q241.6 292.7 240.5 293.5Q239.5 294.2 238.5 294Q237.5 293.8 237 294.8Q236.5 295.9 235.4 296.2Q234.3 296.5 233.7 296Q233.2 295.4 232.3 296.2Q231.5 296.9 230.4 296.3Q229.4 295.7 228.9 294.8Q228.3 294 227.2 294.2Q226.1 294.4 225.2 293.5Q224.4 292.5 224.5 291.4Q224.6 290.2 223.6 289.6Q222.7 289 222.3 287.5Q221.9 286.1 222.3 284.7Q222.7 283.4 222.2 282.2Q221.8 281.1 221.9 279.3Q222.1 277.5 222.7 276.5Q223.3 275.5 223 274.2Q222.7 273 223.3 271.6Q223.8 270.3 224.6 269.7Q225.3 269.2 225.2 267.9Q225.1 266.5 225.9 265.5Q226.6 264.4 227.3 264.1Q227.9 263.8 227.8 262.5Q227.7 261.3 228.5 260.4Q229.2 259.4 230.2 259Q231.1 258.6 231.9 259Q232.6 259.4 233.6 258.9Z" fill="#384720"/><path d="M227 268.2Q222.8 273.4 222.5 281.7Q223.3 289 227 291.1Q228.4 283.8 227.5 277.5Q228.9 271.3 227 268.2Z" fill="#3d4c25"/><path d="M232.6 260.4Q236 264 235.4 271.3Q239.6 276.5 238.7 285.9Q239.1 292.1 233.5 295.8Q229.3 290 230.3 281.7Q229 272.3 230.7 266.1Q229.8 261.9 232.6 260.4Z" fill="#2f3b18"/><path d="M251.1 298.8v7.5" stroke="#2a2313" stroke-width="1.3"/><path d="M250.4 263.9Q249.3 263.4 248.3 263.9Q247.3 264.4 246.7 265.5Q246.2 266.5 246.3 267.5Q246.4 268.6 245.3 269Q244.3 269.4 243.6 270.6Q243 271.7 243.1 273Q243.2 274.2 242.4 274.9Q241.7 275.7 241.3 277Q240.9 278.4 241.2 279.6Q241.5 280.9 240.9 281.9Q240.4 283 240.5 284.6Q240.6 286.3 240.9 287.4Q241.3 288.6 240.9 289.7Q240.6 290.9 240.8 292.4Q241.1 294 241.9 294.8Q242.6 295.7 242.5 296.7Q242.4 297.7 243.5 298.5Q244.5 299.2 245.5 299Q246.5 298.8 247 299.8Q247.5 300.9 248.6 301.2Q249.7 301.5 250.3 301Q250.8 300.4 251.7 301.2Q252.5 301.9 253.6 301.3Q254.6 300.7 255.1 299.8Q255.7 299 256.8 299.2Q257.9 299.4 258.8 298.5Q259.6 297.5 259.5 296.4Q259.4 295.2 260.4 294.6Q261.3 294 261.7 292.5Q262.1 291.1 261.7 289.7Q261.3 288.4 261.8 287.2Q262.2 286.1 262.1 284.3Q261.9 282.5 261.3 281.5Q260.7 280.5 261 279.2Q261.3 278 260.7 276.6Q260.2 275.3 259.4 274.7Q258.7 274.2 258.8 272.9Q258.9 271.5 258.1 270.5Q257.4 269.4 256.7 269.1Q256.1 268.8 256.2 267.5Q256.3 266.3 255.5 265.4Q254.8 264.4 253.8 264Q252.9 263.6 252.1 264Q251.4 264.4 250.4 263.9Z" fill="#384720"/><path d="M257 273.2Q261.2 278.4 261.5 286.7Q260.7 294 257 296.1Q255.6 288.8 256.5 282.5Q255.1 276.3 257 273.2Z" fill="#3d4c25"/><path d="M251.4 265.4Q248 269 248.6 276.3Q244.4 281.5 245.3 290.9Q244.9 297.1 250.5 300.8Q254.7 295 253.7 286.7Q255 277.3 253.3 271.1Q254.2 266.9 251.4 265.4Z" fill="#2f3b18"/><path d="M269.9 303.8v7.5" stroke="#2a2313" stroke-width="1.3"/><path d="M271.2 268.9Q272.3 268.4 273.3 268.9Q274.3 269.4 274.9 270.5Q275.4 271.5 275.3 272.5Q275.2 273.6 276.3 274Q277.3 274.4 278 275.6Q278.6 276.7 278.5 278Q278.4 279.2 279.2 279.9Q279.9 280.7 280.3 282Q280.7 283.4 280.4 284.6Q280.1 285.9 280.7 286.9Q281.2 288 281.1 289.6Q281 291.3 280.7 292.4Q280.3 293.6 280.7 294.7Q281 295.9 280.8 297.4Q280.5 299 279.7 299.8Q279 300.7 279.1 301.7Q279.2 302.7 278.1 303.5Q277.1 304.2 276.1 304Q275.1 303.8 274.6 304.8Q274.1 305.9 273 306.2Q271.9 306.5 271.3 306Q270.8 305.4 269.9 306.2Q269.1 306.9 268.1 306.3Q267 305.7 266.5 304.8Q265.9 304 264.8 304.2Q263.7 304.4 262.8 303.5Q262 302.5 262.1 301.4Q262.2 300.2 261.2 299.6Q260.3 299 259.9 297.5Q259.5 296.1 259.9 294.7Q260.3 293.4 259.8 292.2Q259.4 291.1 259.5 289.3Q259.7 287.5 260.3 286.5Q260.9 285.5 260.6 284.2Q260.3 283 260.9 281.6Q261.4 280.3 262.2 279.7Q262.9 279.2 262.8 277.9Q262.7 276.5 263.5 275.5Q264.2 274.4 264.9 274.1Q265.5 273.8 265.4 272.5Q265.3 271.3 266.1 270.4Q266.8 269.4 267.8 269Q268.7 268.6 269.5 269Q270.2 269.4 271.2 268.9Z" fill="#384720"/><path d="M264.6 278.2Q260.4 283.4 260.1 291.7Q260.9 299 264.6 301.1Q266 293.8 265.1 287.5Q266.5 281.3 264.6 278.2Z" fill="#3d4c25"/><path d="M270.2 270.4Q273.6 274 273 281.3Q277.2 286.5 276.3 295.9Q276.7 302.1 271.1 305.8Q266.9 300 267.9 291.7Q266.6 282.3 268.3 276.1Q267.4 271.9 270.2 270.4Z" fill="#2f3b18"/><path d="M288.7 308.8v7.5" stroke="#2a2313" stroke-width="1.3"/><path d="M288 273.9Q286.9 273.4 285.9 273.9Q284.9 274.4 284.3 275.5Q283.8 276.5 283.9 277.5Q284 278.6 282.9 279Q281.9 279.4 281.2 280.6Q280.6 281.7 280.7 283Q280.8 284.2 280 284.9Q279.3 285.7 278.9 287Q278.5 288.4 278.8 289.6Q279.1 290.9 278.5 291.9Q278 293 278.1 294.6Q278.2 296.3 278.5 297.4Q278.9 298.6 278.5 299.7Q278.2 300.9 278.4 302.4Q278.7 304 279.5 304.8Q280.2 305.7 280.1 306.7Q280 307.7 281.1 308.5Q282.1 309.2 283.1 309Q284.1 308.8 284.6 309.8Q285.1 310.9 286.2 311.2Q287.3 311.5 287.9 311Q288.4 310.4 289.3 311.2Q290.1 311.9 291.1 311.3Q292.2 310.7 292.7 309.8Q293.3 309 294.4 309.2Q295.5 309.4 296.4 308.5Q297.2 307.5 297.1 306.4Q297 305.2 298 304.6Q298.9 304 299.3 302.5Q299.7 301.1 299.3 299.7Q298.9 298.4 299.4 297.2Q299.8 296.1 299.7 294.3Q299.5 292.5 298.9 291.5Q298.3 290.5 298.6 289.2Q298.9 288 298.3 286.6Q297.8 285.3 297 284.7Q296.3 284.2 296.4 282.9Q296.5 281.5 295.7 280.5Q295 279.4 294.3 279.1Q293.7 278.8 293.8 277.5Q293.9 276.3 293.1 275.4Q292.4 274.4 291.4 274Q290.5 273.6 289.7 274Q289 274.4 288 273.9Z" fill="#384720"/><path d="M294.6 283.2Q298.8 288.4 299.1 296.7Q298.3 304 294.6 306.1Q293.2 298.8 294.1 292.5Q292.7 286.3 294.6 283.2Z" fill="#3d4c25"/><path d="M289 275.4Q285.6 279 286.2 286.3Q282 291.5 282.9 300.9Q282.5 307.1 288.1 310.8Q292.3 305 291.3 296.7Q292.6 287.3 290.9 281.1Q291.8 276.9 289 275.4Z" fill="#2f3b18"/><path d="M307.5 313.8v7.5" stroke="#2a2313" stroke-width="1.3"/><path d="M308.8 278.9Q309.9 278.4 310.9 278.9Q311.9 279.4 312.5 280.5Q313 281.5 312.9 282.5Q312.8 283.6 313.9 284Q314.9 284.4 315.6 285.6Q316.2 286.7 316.1 288Q316 289.2 316.8 289.9Q317.5 290.7 317.9 292Q318.3 293.4 318 294.6Q317.7 295.9 318.3 296.9Q318.8 298 318.7 299.6Q318.6 301.3 318.3 302.4Q317.9 303.6 318.3 304.7Q318.6 305.9 318.4 307.4Q318.1 309 317.3 309.8Q316.6 310.7 316.7 311.7Q316.8 312.7 315.7 313.5Q314.7 314.2 313.7 314Q312.7 313.8 312.2 314.8Q311.7 315.9 310.6 316.2Q309.5 316.5 308.9 316Q308.4 315.4 307.5 316.2Q306.7 316.9 305.7 316.3Q304.6 315.7 304.1 314.8Q303.5 314 302.4 314.2Q301.3 314.4 300.4 313.5Q299.6 312.5 299.7 311.4Q299.8 310.2 298.8 309.6Q297.9 309 297.5 307.5Q297.1 306.1 297.5 304.7Q297.9 303.4 297.4 302.2Q297 301.1 297.1 299.3Q297.3 297.5 297.9 296.5Q298.5 295.5 298.2 294.2Q297.9 293 298.5 291.6Q299 290.3 299.8 289.7Q300.5 289.2 300.4 287.9Q300.3 286.5 301.1 285.5Q301.8 284.4 302.5 284.1Q303.1 283.8 303 282.5Q302.9 281.3 303.7 280.4Q304.4 279.4 305.4 279Q306.3 278.6 307.1 279Q307.8 279.4 308.8 278.9Z" fill="#384720"/><path d="M302.2 288.2Q298 293.4 297.7 301.7Q298.5 309 302.2 311.1Q303.6 303.8 302.7 297.5Q304.1 291.3 302.2 288.2Z" fill="#3d4c25"/><path d="M307.8 280.4Q311.2 284 310.6 291.3Q314.8 296.5 313.9 305.9Q314.3 312.1 308.7 315.8Q304.5 310 305.5 301.7Q304.2 292.3 305.9 286.1Q305 281.9 307.8 280.4Z" fill="#2f3b18"/><polygon points="402.6,338 411,342.2 455.2,307.6 448.9,304.6" fill="#2f1b10"/><path d="M448 302.8v7.5" stroke="#2a2313" stroke-width="1.3"/><path d="M447.2 268.4Q446.2 267.9 445.1 268.4Q444.1 268.9 443.5 269.9Q442.9 271 443 272Q443.1 273 442.1 273.4Q441 273.8 440.4 275Q439.7 276.1 439.8 277.3Q439.9 278.6 439.1 279.3Q438.4 280 438 281.3Q437.6 282.7 437.9 283.9Q438.2 285.1 437.6 286.2Q437 287.2 437.1 288.8Q437.2 290.5 437.6 291.6Q438 292.8 437.6 293.9Q437.2 295 437.5 296.6Q437.8 298.1 438.5 298.9Q439.3 299.7 439.2 300.8Q439.1 301.8 440.2 302.5Q441.2 303.2 442.3 303Q443.3 302.8 443.8 303.8Q444.3 304.9 445.4 305.2Q446.6 305.5 447.2 305Q447.7 304.5 448.6 305.2Q449.4 305.9 450.5 305.3Q451.6 304.7 452.1 303.8Q452.7 303 453.8 303.2Q455 303.4 455.9 302.5Q456.7 301.6 456.6 300.5Q456.5 299.3 457.5 298.7Q458.4 298.1 458.8 296.7Q459.2 295.2 458.8 293.9Q458.4 292.5 458.9 291.4Q459.4 290.3 459.2 288.5Q459 286.8 458.4 285.8Q457.9 284.7 458.2 283.5Q458.4 282.3 457.9 280.9Q457.3 279.6 456.5 279.1Q455.8 278.6 455.9 277.2Q456 275.9 455.2 274.9Q454.4 273.8 453.8 273.5Q453.1 273.2 453.2 272Q453.3 270.8 452.5 269.8Q451.7 268.9 450.8 268.5Q449.8 268.1 449.1 268.5Q448.3 268.9 447.2 268.4Z" fill="#384720"/><path d="M454 277.5Q458.3 282.7 458.6 290.9Q457.9 298.1 454 300.1Q452.6 293 453.6 286.8Q452.1 280.6 454 277.5Z" fill="#3d4c25"/><path d="M448.3 269.8Q444.9 273.4 445.4 280.6Q441.1 285.8 442.1 295Q441.6 301.2 447.3 304.8Q451.6 299.1 450.7 290.9Q451.9 281.7 450.2 275.5Q451.2 271.4 448.3 269.8Z" fill="#2f3b18"/><path d="M437.5 310.8v7.5" stroke="#2a2313" stroke-width="1.3"/><path d="M438.9 276.4Q439.9 275.8 441 276.4Q442 276.9 442.6 277.9Q443.2 278.9 443.1 279.9Q443 281 444 281.4Q445.1 281.8 445.7 282.9Q446.4 284.1 446.3 285.3Q446.2 286.5 447 287.2Q447.7 288 448.1 289.3Q448.5 290.6 448.2 291.9Q447.9 293.1 448.5 294.1Q449.1 295.2 449 296.8Q448.9 298.4 448.5 299.6Q448.1 300.7 448.5 301.8Q448.9 303 448.6 304.5Q448.3 306 447.6 306.9Q446.8 307.7 446.9 308.7Q447 309.7 445.9 310.5Q444.9 311.2 443.8 311Q442.8 310.8 442.3 311.8Q441.8 312.8 440.7 313.1Q439.5 313.4 438.9 312.9Q438.4 312.4 437.5 313.1Q436.7 313.9 435.6 313.2Q434.5 312.6 434 311.8Q433.4 311 432.3 311.2Q431.1 311.4 430.2 310.5Q429.4 309.5 429.5 308.4Q429.6 307.3 428.6 306.7Q427.7 306 427.3 304.6Q426.9 303.2 427.3 301.8Q427.7 300.5 427.2 299.4Q426.7 298.2 426.9 296.5Q427.1 294.7 427.7 293.7Q428.2 292.7 427.9 291.5Q427.7 290.2 428.2 288.9Q428.8 287.6 429.6 287Q430.3 286.5 430.2 285.2Q430.1 283.9 430.9 282.8Q431.7 281.8 432.3 281.5Q433 281.2 432.9 279.9Q432.8 278.7 433.6 277.8Q434.4 276.9 435.3 276.5Q436.3 276 437 276.5Q437.8 276.9 438.9 276.4Z" fill="#384720"/><path d="M432.1 285.5Q427.8 290.6 427.5 298.9Q428.2 306 432.1 308.1Q433.5 300.9 432.5 294.7Q434 288.6 432.1 285.5Z" fill="#3d4c25"/><path d="M437.8 277.8Q441.2 281.4 440.7 288.6Q445 293.7 444 303Q444.5 309.1 438.8 312.7Q434.5 307.1 435.4 298.9Q434.2 289.6 435.9 283.4Q434.9 279.3 437.8 277.8Z" fill="#2f3b18"/><path d="M427 318.7v7.5" stroke="#2a2313" stroke-width="1.3"/><path d="M426.2 284.3Q425.2 283.8 424.1 284.3Q423.1 284.8 422.5 285.8Q421.9 286.9 422 287.9Q422.1 288.9 421.1 289.3Q420 289.7 419.4 290.9Q418.7 292 418.8 293.2Q418.9 294.5 418.1 295.2Q417.4 295.9 417 297.2Q416.6 298.6 416.9 299.8Q417.2 301 416.6 302.1Q416 303.1 416.1 304.7Q416.2 306.4 416.6 307.5Q417 308.7 416.6 309.8Q416.2 310.9 416.5 312.5Q416.8 314 417.5 314.8Q418.3 315.6 418.2 316.7Q418.1 317.7 419.2 318.4Q420.2 319.1 421.3 318.9Q422.3 318.7 422.8 319.7Q423.3 320.8 424.4 321.1Q425.6 321.4 426.2 320.9Q426.7 320.4 427.6 321.1Q428.4 321.8 429.5 321.2Q430.6 320.6 431.1 319.7Q431.7 318.9 432.8 319.1Q434 319.3 434.9 318.4Q435.7 317.5 435.6 316.4Q435.5 315.2 436.5 314.6Q437.4 314 437.8 312.6Q438.2 311.1 437.8 309.8Q437.4 308.4 437.9 307.3Q438.4 306.2 438.2 304.4Q438 302.7 437.4 301.7Q436.9 300.6 437.2 299.4Q437.4 298.2 436.9 296.8Q436.3 295.5 435.5 295Q434.8 294.5 434.9 293.1Q435 291.8 434.2 290.8Q433.4 289.7 432.8 289.4Q432.1 289.1 432.2 287.9Q432.3 286.7 431.5 285.7Q430.7 284.8 429.8 284.4Q428.8 284 428.1 284.4Q427.3 284.8 426.2 284.3Z" fill="#384720"/><path d="M433 293.4Q437.3 298.6 437.6 306.8Q436.9 314 433 316Q431.6 308.9 432.6 302.7Q431.1 296.5 433 293.4Z" fill="#3d4c25"/><path d="M427.3 285.7Q423.9 289.3 424.4 296.5Q420.1 301.7 421.1 310.9Q420.6 317.1 426.3 320.7Q430.6 315 429.7 306.8Q430.9 297.6 429.2 291.4Q430.2 287.3 427.3 285.7Z" fill="#2f3b18"/><path d="M416.5 326.7v7.5" stroke="#2a2313" stroke-width="1.3"/><path d="M417.9 292.3Q418.9 291.7 420 292.3Q421 292.8 421.6 293.8Q422.2 294.8 422.1 295.8Q422 296.9 423 297.3Q424.1 297.7 424.7 298.8Q425.4 300 425.3 301.2Q425.2 302.4 426 303.1Q426.7 303.9 427.1 305.2Q427.5 306.5 427.2 307.8Q426.9 309 427.5 310Q428.1 311.1 428 312.7Q427.9 314.3 427.5 315.5Q427.1 316.6 427.5 317.7Q427.9 318.9 427.6 320.4Q427.3 321.9 426.6 322.8Q425.8 323.6 425.9 324.6Q426 325.6 424.9 326.4Q423.9 327.1 422.8 326.9Q421.8 326.7 421.3 327.7Q420.8 328.7 419.7 329Q418.5 329.3 417.9 328.8Q417.4 328.3 416.5 329Q415.7 329.8 414.6 329.1Q413.5 328.5 413 327.7Q412.4 326.9 411.3 327.1Q410.1 327.3 409.2 326.4Q408.4 325.4 408.5 324.3Q408.6 323.2 407.6 322.6Q406.7 321.9 406.3 320.5Q405.9 319.1 406.3 317.7Q406.7 316.4 406.2 315.3Q405.7 314.1 405.9 312.4Q406.1 310.6 406.7 309.6Q407.2 308.6 406.9 307.4Q406.7 306.1 407.2 304.8Q407.8 303.5 408.6 302.9Q409.3 302.4 409.2 301.1Q409.1 299.8 409.9 298.7Q410.7 297.7 411.3 297.4Q412 297.1 411.9 295.8Q411.8 294.6 412.6 293.7Q413.4 292.8 414.3 292.4Q415.3 291.9 416 292.4Q416.8 292.8 417.9 292.3Z" fill="#384720"/><path d="M411.1 301.4Q406.8 306.5 406.5 314.8Q407.2 321.9 411.1 324Q412.5 316.8 411.5 310.6Q413 304.5 411.1 301.4Z" fill="#3d4c25"/><path d="M416.8 293.7Q420.2 297.3 419.7 304.5Q424 309.6 423 318.9Q423.5 325 417.8 328.6Q413.5 323 414.4 314.8Q413.2 305.5 414.9 299.3Q413.9 295.2 416.8 293.7Z" fill="#2f3b18"/><path d="M406 334.6v7.5" stroke="#2a2313" stroke-width="1.3"/><path d="M405.2 300.2Q404.2 299.7 403.1 300.2Q402.1 300.7 401.5 301.7Q400.9 302.8 401 303.8Q401.1 304.8 400.1 305.2Q399 305.6 398.4 306.8Q397.7 307.9 397.8 309.1Q397.9 310.4 397.1 311.1Q396.4 311.8 396 313.1Q395.6 314.5 395.9 315.7Q396.2 316.9 395.6 318Q395 319 395.1 320.6Q395.2 322.3 395.6 323.4Q396 324.6 395.6 325.7Q395.2 326.8 395.5 328.4Q395.8 329.9 396.5 330.7Q397.3 331.5 397.2 332.6Q397.1 333.6 398.2 334.3Q399.2 335 400.3 334.8Q401.3 334.6 401.8 335.6Q402.3 336.7 403.4 337Q404.6 337.3 405.2 336.8Q405.7 336.3 406.6 337Q407.4 337.7 408.5 337.1Q409.6 336.5 410.1 335.6Q410.7 334.8 411.8 335Q413 335.2 413.9 334.3Q414.7 333.4 414.6 332.3Q414.5 331.1 415.5 330.5Q416.4 329.9 416.8 328.5Q417.2 327 416.8 325.7Q416.4 324.3 416.9 323.2Q417.4 322.1 417.2 320.3Q417 318.6 416.4 317.6Q415.9 316.5 416.2 315.3Q416.4 314.1 415.9 312.7Q415.3 311.4 414.5 310.9Q413.8 310.4 413.9 309Q414 307.7 413.2 306.7Q412.4 305.6 411.8 305.3Q411.1 305 411.2 303.8Q411.3 302.6 410.5 301.6Q409.7 300.7 408.8 300.3Q407.8 299.9 407.1 300.3Q406.3 300.7 405.2 300.2Z" fill="#384720"/><path d="M412 309.3Q416.3 314.5 416.6 322.7Q415.9 329.9 412 331.9Q410.6 324.8 411.6 318.6Q410.1 312.4 412 309.3Z" fill="#3d4c25"/><path d="M406.3 301.6Q402.9 305.2 403.4 312.4Q399.1 317.6 400.1 326.8Q399.6 333 405.3 336.6Q409.6 330.9 408.7 322.7Q409.9 313.5 408.2 307.3Q409.2 303.2 406.3 301.6Z" fill="#2f3b18"/><path d="M463.6 362.2Q461.2 360 465.4 357.4L476.4 350.8Q480.2 349 481.2 351.4Q481.6 353.4 478 355.6L467.2 361.8Q465 363 463.6 362.2Z" fill="#b4b6b9"/><path d="M450.7 352.5v3.2M450.7 352.5L466.2 356.2M478 346.7v3.4M478 346.7L495.8 352M495.8 352v3.6M468 355v3.6M471.8 352.8v3.6M475 351v3.4" stroke="#8e9093" stroke-width="0.7" fill="none"/><path d="M414 371.2l6 1.4l4.5 -0.6l5 2.2M417 373.8l5 -1.6l5 2.4M469 379.4l6 1.4l4.5 -0.6l5 2.2M472 382l5 -1.6l5 2.4" stroke="#f4f4f4" stroke-width="1.1" fill="none"/><g stroke="#111" stroke-width="1.6" fill="#111"><path d="M44.2 403.4V390" fill="none"/><path d="M44.2 385.6l-2.3 5.6h4.6z" stroke="none"/><path d="M44.2 403.4L52 397.3" fill="none" stroke-width="1.3"/><path d="M55.6 394.4l-5.6 2l3 3.4z" stroke="none"/><path d="M44.2 403.4L57.5 407" fill="none"/><path d="M63.6 408.7l-6.4 -4.2l-1.2 4.8z" stroke="none"/><circle cx="44.2" cy="403.4" r="1.8" stroke="none"/></g><g font-family="Liberation Sans, sans-serif" font-size="6.5" fill="#333"><text x="46.6" y="384.6">Z</text><text x="56.6" y="393.4">Y</text><text x="64.2" y="407.4">X</text></g></g></svg><!-- ===== title bar ===== -->
<svg class="abs" style="left:0;top:0" width="900" height="34" viewBox="0 0 900 34">
 <g stroke="#555" stroke-width="0.9" fill="none">
  <path d="M9 5.8l6 6M15 5.8l-6 6"/>
  <rect x="35.8" y="7" width="4.6" height="4.6"/><path d="M34.6 9.6V5.8h4.6"/>
  <path d="M58.6 9h6.4"/>
 </g>
 <!-- logo -->
 <g>
  <path d="M90.6 3.4L86.6 7.6C84.4 10 85.6 14 89.4 14.3" stroke="#1d74c4" stroke-width="1.7" fill="none" stroke-linecap="round"/>
  <path d="M90.6 3.4L94.8 7.6C95.6 8.5 96 9.4 96 10" stroke="#1d78c8" stroke-width="1.7" fill="none" stroke-linecap="round"/>
  <path d="M89.4 14.4V9.8C89.4 8.2 92.8 8.2 92.8 9.8" stroke="#2a8ad8" stroke-width="1.2" fill="none"/>
  <g fill="#4aa6ea"><rect x="91.4" y="10.6" width="1.5" height="1.4"/><rect x="93.6" y="10.6" width="1.5" height="1.4"/><rect x="91.4" y="12.5" width="1.5" height="1.4"/><rect x="93.6" y="12.5" width="1.5" height="1.4"/><rect x="91.4" y="14.3" width="1.5" height="0.9"/><rect x="93.6" y="14.3" width="1.5" height="0.9"/></g>
 </g>
 <!-- quick access (right) -->
 <g>
  <g transform="translate(2 0)"><path d="M804.4 4.6h4l2.4 2.4v6h-6.4z" fill="#fff" stroke="#b9b9b9" stroke-width="0.8"/><path d="M808.4 4.6v2.4h2.4" fill="none" stroke="#b9b9b9" stroke-width="0.7"/></g>
  <g transform="translate(2.2 0)"><path d="M818.6 6.2h3l1 1.2h4.6v5.4h-8.6z" fill="#e2b63c"/><path d="M818.6 12.8l1.6-4h8.2l-1.8 4z" fill="#f2d26a"/><path d="M824.2 5.6l2.6-1.6v1.1h1.6v1.2h-1.6v1z" fill="#2fa43c"/></g>
  <g transform="translate(3 0)"><rect x="834.4" y="4.4" width="8.4" height="8.6" rx="0.8" fill="#2a63b8"/><rect x="836" y="4.4" width="5" height="3.2" fill="#e9eef6"/><rect x="836.2" y="9.2" width="4.8" height="3.8" fill="#9fb7dc"/></g>
  <g transform="translate(852.8 4.2) scale(1.00) translate(9.4 0) scale(-1 1)"><path d="M8.8 7.8C9.8 3.6 6.6 .6 2.8 2.6" fill="none" stroke="#b9b9b9" stroke-width="2"/><path d="M0 .2L.3 5.8L5.4 4.4Z" fill="#b9b9b9"/></g>
  <g transform="translate(868.4 4.2) scale(1.00)"><path d="M8.8 7.8C9.8 3.6 6.6 .6 2.8 2.6" fill="none" stroke="#2a6fc4" stroke-width="2"/><path d="M0 .2L.3 5.8L5.4 4.4Z" fill="#2a6fc4"/></g>
  <path d="M888.4 12.4V8.4L891.2 5.2L894 8.4" stroke="#1c86d8" stroke-width="1.3" fill="none" stroke-linecap="round" stroke-linejoin="round"/><path d="M891 12.4H888.6" stroke="#1c86d8" stroke-width="1.3"/><rect x="891.4" y="9.4" width="2.8" height="3.4" fill="#1c86d8"/>
 </g>
 <!-- row2 buttons -->
 <g fill="#fbfbfb" stroke="#d2d2d2" stroke-width="0.8">
  <rect x="4" y="20" width="15.4" height="11.2" rx="1"/><rect x="23.8" y="20" width="15.6" height="11.2" rx="1"/>
  <rect x="43.4" y="20" width="15.4" height="11.2" rx="1"/><rect x="63.4" y="20" width="15.6" height="11.2" rx="1"/>
  <rect x="82.8" y="20" width="81.4" height="11.2" rx="1"/><rect x="168.4" y="20" width="31.6" height="11.2" rx="1"/>
 </g>
 <path d="M9.6 27l2.2-2.2L14 27" stroke="#1b6ec2" stroke-width="1" fill="none"/>
 <path d="M31.4 21.8c-1.8 2.2-3.6 3.6-3.6 5.6c0 1.6 1.4 2.6 3.2 2.6" fill="none" stroke="#2a7bd0" stroke-width="1.1"/><circle cx="32.6" cy="27.4" r="2.5" fill="none" stroke="#e0409a" stroke-width="1.1"/><path d="M31.4 21.8c1.2 1.4 2.2 2.4 3 3.4" stroke="#2a7bd0" stroke-width="1.1" fill="none"/>
 <ellipse cx="51" cy="27.6" rx="4.6" ry="2" fill="#c8743a"/><ellipse cx="51" cy="25.4" rx="4.6" ry="2" fill="#e9d5b5" stroke="#7a4a28" stroke-width="0.7"/><path d="M48 23.2c2-1 5-0.6 6 0.6" stroke="#5a3a22" stroke-width="0.9" fill="none"/>
 <rect x="66.4" y="22.4" width="8" height="5.6" fill="#dbe9f8" stroke="#2a6fc4" stroke-width="0.9"/><rect x="70.6" y="25.4" width="5" height="4" fill="#3b62b0"/><rect x="71.4" y="26" width="1.3" height="1.2" fill="#f0c0c0"/><rect x="73.4" y="26" width="1.3" height="1.2" fill="#f0c0c0"/><path d="M68 29.8h4" stroke="#2a6fc4" stroke-width="0.9"/>
 <path d="M86.4 25.2l1.5 1.6l1.5-1.6" stroke="#444" stroke-width="0.8" fill="none"/>
 <path d="M171.8 25.2l1.5 1.6l1.5-1.6" stroke="#444" stroke-width="0.8" fill="none"/>
 <!-- active tab underline -->
 <rect x="811.8" y="31.2" width="43.2" height="1.9" fill="#1b78d0"/>
</svg>
<div class="t f" style="left:97.8px;top:4.9px;font-size:7px;font-weight:bold;color:#5a5a5a;letter-spacing:0.5px;transform:scaleX(0.7658)">INSTALSYSTEM</div>
<div class="t f" style="left:252px;top:4.5px;font-size:7.6px;color:#565656;direction:ltr;transform:scaleX(0.8425)">(A2.۲۶ بازنگري) IR ALPHA-Final 5 InstalSystem Editor - SCREEN SHOT.isproj - 1 - D:\Users\K.Azimi\Desktop\BIM- SAMPLE PROJECT\BIM</div>
<div class="t f blue rtl" style="left:92.4px;top:21.2px;font-size:8px;transform:scaleX(0.8522)">تغییر آرایش صفحه نمایش</div>
<div class="t f blue rtl" style="left:177.6px;top:21.2px;font-size:8px;transform:scaleX(0.8696)">پنجره‌ها</div>
<div class="t f rtl" style="left:813.6px;top:20.2px;font-size:9.4px;color:#1a1a1a;transform:scaleX(0.7013)">ابزارهای اصلی</div>
<div class="t f rtl" style="left:874px;top:20.6px;font-size:8.8px;color:#333;transform:scaleX(0.7059)">فایل</div>
<!-- ===== ribbon ===== -->
<div class="sep" style="left:213px"></div>
<div class="sep" style="left:533.5px"></div>
<div class="sep" style="left:622px"></div>
<div class="sep" style="left:688.4px"></div>
<div class="sep" style="left:808.4px"></div>
<div class="t f rtl " style="left:843.3px;top:75.6px;font-size:7.8px;transform:scaleX(0.7567);color:#5a5a5a">محاسبات</div>
<div class="t f rtl " style="left:739.0px;top:75.6px;font-size:7.8px;transform:scaleX(0.7875);color:#5a5a5a">ویرایش</div>
<div class="t f rtl " style="left:646.8px;top:75.6px;font-size:7.8px;transform:scaleX(0.8095);color:#5a5a5a">نمایش</div>
<div class="t f rtl " style="left:553.0px;top:75.6px;font-size:7.8px;transform:scaleX(0.8183);color:#444">برچسب‌ها و تصاویر</div>
<div class="t f rtl " style="left:369.7px;top:75.6px;font-size:7.8px;transform:scaleX(0.8300);color:#444">پایه</div>
<div class="t f rtl " style="left:595.0px;top:55.6px;font-size:7.8px;transform:scaleX(0.7615);color:#a3a3a3">برچسب</div>
<div class="t f rtl " style="left:577.5px;top:55.6px;font-size:7.8px;transform:scaleX(0.7154);color:#a3a3a3">خط</div>
<div class="t f rtl " style="left:577.4px;top:62.5px;font-size:7.8px;transform:scaleX(0.9214);color:#a3a3a3">ابعاد</div>
<div class="t f rtl " style="left:555.3px;top:55.6px;font-size:7.8px;transform:scaleX(0.8750);color:#a3a3a3">متن</div>
<div class="t f rtl " style="left:502.0px;top:55.6px;font-size:7.8px;transform:scaleX(0.7404);color:#a3a3a3">وارد کردن</div>
<div class="t f rtl " style="left:503.5px;top:62.5px;font-size:7.8px;transform:scaleX(0.8673);color:#a3a3a3">فایل پایه</div>
<div class="t f rtl " style="left:479.5px;top:55.6px;font-size:7.8px;transform:scaleX(0.8273);color:#a3a3a3">مقیاس</div>
<div class="t f rtl " style="left:483.5px;top:62.5px;font-size:7.8px;transform:scaleX(0.7643);color:#a3a3a3">بندی</div>
<div class="t f rtl " style="left:460.0px;top:55.6px;font-size:7.8px;transform:scaleX(0.8235);color:#a3a3a3">نقطه</div>
<div class="t f rtl " style="left:459.7px;top:62.5px;font-size:7.8px;transform:scaleX(0.8412);color:#a3a3a3">مرجع</div>
<div class="t f rtl " style="left:407.8px;top:55.6px;font-size:7.8px;transform:scaleX(0.8218);color:#a3a3a3">قسمت underlay</div>
<div class="t f rtl " style="left:415.6px;top:62.5px;font-size:7.8px;transform:scaleX(0.7748);color:#a3a3a3">قابل مشاهده</div>
<div class="t f rtl " style="left:380.8px;top:55.6px;font-size:7.8px;transform:scaleX(0.8360);color:#a3a3a3">جابجایی</div>
<div class="t f rtl " style="left:376.7px;top:62.5px;font-size:7.8px;transform:scaleX(0.8886);color:#a3a3a3">لایه زیرین</div>
<div class="t f rtl " style="left:328.0px;top:55.6px;font-size:7.8px;transform:scaleX(0.8336);color:#a3a3a3">تصحیح تراز المان</div>
<div class="t f rtl " style="left:333.6px;top:62.5px;font-size:7.8px;transform:scaleX(0.8112);color:#a3a3a3">های گرافیکی</div>
<div class="t f rtl " style="left:296.7px;top:55.6px;font-size:7.8px;transform:scaleX(0.5687);color:#262626">ورود</div>
<div class="t f rtl " style="left:287.8px;top:62.5px;font-size:7.8px;transform:scaleX(0.7726);color:#262626">مدل IFC</div>
<div class="t f rtl " style="left:258.6px;top:55.6px;font-size:7.8px;transform:scaleX(0.6740);color:#262626">ایجاد طبقات</div>
<div class="t f rtl " style="left:254.6px;top:62.5px;font-size:7.8px;transform:scaleX(0.7858);color:#262626">از فایل IFC</div>
<div class="t f rtl " style="left:221.7px;top:55.6px;font-size:7.8px;transform:scaleX(0.8465);color:#262626">تفسیر از</div>
<div class="t f rtl " style="left:222.6px;top:62.5px;font-size:7.8px;transform:scaleX(0.8178);color:#262626">فایل IFC</div>
<svg class="abs" style="left:0;top:33px" width="900" height="51" viewBox="0 33 900 51">
<path d="M883.5 64.5l1.5 1.6l1.5 -1.6" stroke="#444" stroke-width="0.8" fill="none"/>
<path d="M715.8 44.8l1.5 1.6l1.5 -1.6" stroke="#444" stroke-width="0.8" fill="none"/>
<path d="M736.9 44.8l1.5 1.6l1.5 -1.6" stroke="#444" stroke-width="0.8" fill="none"/>
<path d="M695.0 62.2l1.5 1.6l1.5 -1.6" stroke="#444" stroke-width="0.8" fill="none"/>
<path d="M715.8 62.2l1.5 1.6l1.5 -1.6" stroke="#444" stroke-width="0.8" fill="none"/>
<path d="M736.9 62.2l1.5 1.6l1.5 -1.6" stroke="#444" stroke-width="0.8" fill="none"/>
<path d="M628.9 44.8l1.5 1.6l1.5 -1.6" stroke="#444" stroke-width="0.8" fill="none"/>
<path d="M602.8 65.4l1.5 1.6l1.5 -1.6" stroke="#9a9a9a" stroke-width="0.8" fill="none"/>
<path d="M572.9 65.6l1.5 1.6l1.5 -1.6" stroke="#9a9a9a" stroke-width="0.8" fill="none"/>
<path d="M558.5 65.4l1.5 1.6l1.5 -1.6" stroke="#9a9a9a" stroke-width="0.8" fill="none"/>
<path d="M250.7 65.7l1.5 1.6l1.5 -1.6" stroke="#333" stroke-width="0.8" fill="none"/>
<path d="M218.5 65.7l1.5 1.6l1.5 -1.6" stroke="#333" stroke-width="0.8" fill="none"/>
<path d="M4.2 81.6l2.2 -2.2l2.2 2.2" stroke="#333" stroke-width="1" fill="none"/>
<rect x="878" y="36.8" width="14.6" height="17" rx="1.2" fill="#c9d1ec" stroke="#5d6fb2" stroke-width="1"/>
<rect x="880" y="38.4" width="10.6" height="2.6" fill="#dfeedd" stroke="#7fae7a" stroke-width="0.5"/>
<g fill="#f4f6fc"><rect x="880.0" y="42.6" width="2" height="1.8"/><rect x="880.0" y="45.4" width="2" height="1.8"/><rect x="880.0" y="48.2" width="2" height="1.8"/><rect x="880.0" y="51.0" width="2" height="1.8"/><rect x="882.9" y="42.6" width="2" height="1.8"/><rect x="882.9" y="45.4" width="2" height="1.8"/><rect x="882.9" y="48.2" width="2" height="1.8"/><rect x="882.9" y="51.0" width="2" height="1.8"/><rect x="885.8" y="42.6" width="2" height="1.8"/><rect x="885.8" y="45.4" width="2" height="1.8"/><rect x="885.8" y="48.2" width="2" height="1.8"/><rect x="885.8" y="51.0" width="2" height="1.8"/><rect x="888.7" y="42.6" width="2" height="1.8"/><rect x="888.7" y="45.4" width="2" height="1.8"/><rect x="888.7" y="48.2" width="2" height="1.8"/><rect x="888.7" y="51.0" width="2" height="1.8"/></g>
<rect x="888.6" y="42.4" width="2.2" height="2.2" fill="#d43a2f"/>
<rect x="864.8" y="43" width="8.6" height="6.4" fill="#d8481f"/><rect x="865.4" y="40.6" width="7.4" height="2.6" fill="#f0b23a"/><rect x="867.6" y="45" width="3" height="2" fill="#f6e3a0"/><path d="M866 40.6l1-1.6h4.4l1 1.6" stroke="#b8731e" stroke-width="0.8" fill="none"/>
<path d="M852 50.6V43.6L856.2 40.6L860.6 43.6V50.6Z" fill="#e9e4dc" stroke="#6a5a4a" stroke-width="0.8"/><rect x="853.4" y="45" width="2.2" height="5.6" fill="#b5462d"/><rect x="857" y="44.6" width="2.4" height="6" fill="#3b6fb8"/><rect x="857.6" y="45.4" width="1.2" height="3" fill="#d8e6f6"/>
<rect x="838" y="40" width="11.4" height="11" fill="#f25a1e"/><rect x="844" y="41.4" width="3.6" height="8.2" rx="1.6" fill="#ffd83a"/><path d="M842.4 41.6v7.8M840.4 43.2l2 1.4l-2 1.4M840.4 46.2l2 1.2l-2 1.4" stroke="#2a6fd0" stroke-width="0.9" fill="none"/>
<path d="M831.4 41.4c1.6 2.6 3.2 4.4 3.2 6.2a3.2 3.2 0 0 1 -6.4 0c0 -1.8 1.6 -3.6 3.2 -6.2z" fill="#e4e4e4" stroke="#bdbdbd" stroke-width="0.7"/>
<path d="M818.6 41.4c1.6 2.6 3.2 4.4 3.2 6.2a3.2 3.2 0 0 1 -6.4 0c0 -1.8 1.6 -3.6 3.2 -6.2z" fill="#e4e4e4" stroke="#bdbdbd" stroke-width="0.7"/>
<path d="M864 60h9M864 62.6h9M864 59v4.6M873 59v4.6" stroke="#444" stroke-width="0.9" fill="none"/><rect x="865" y="65.4" width="2.6" height="1.4" fill="#f2e21c"/><rect x="869.4" y="65.4" width="2.6" height="1.4" fill="#f2e21c"/>
<rect x="851.6" y="58.6" width="6.4" height="6.4" fill="#f3e7e2" stroke="#c9a79a" stroke-width="0.6"/><circle cx="854.2" cy="61.4" r="1.8" fill="none" stroke="#d86a5a" stroke-width="0.7"/><rect x="854.6" y="61" width="5.8" height="6" fill="#d9b98a" stroke="#a98a5a" stroke-width="0.6"/><path d="M856 66l3.4 -4" stroke="#e9a21e" stroke-width="1.1"/>
<rect x="781.4" y="41.6" width="6" height="8" rx="0.8" fill="#d98a2b" stroke="#9a5a18" stroke-width="0.6"/><rect x="783" y="40.8" width="2.8" height="1.6" fill="#777"/><rect x="785" y="44.6" width="5" height="6" fill="#f3f3f3" stroke="#9a9a9a" stroke-width="0.6"/>
<rect x="793.6" y="41.4" width="5.6" height="7" fill="#f6f6f6" stroke="#b5b5b5" stroke-width="0.7"/><rect x="796.6" y="43.6" width="5.8" height="7" fill="#f6f6f6" stroke="#b5b5b5" stroke-width="0.7"/>
<g transform="translate(769.0 41.2) scale(1.00)"><path d="M8.8 7.8C9.8 3.6 6.6 .6 2.8 2.6" fill="none" stroke="#2a6fc4" stroke-width="2"/><path d="M0 .2L.3 5.8L5.4 4.4Z" fill="#2a6fc4"/></g>
<rect x="756.6" y="41.6" width="8.2" height="8" fill="#f4f4f4" stroke="#bdbdbd" stroke-width="0.7"/><path d="M760.7 41.6v8" stroke="#bdbdbd" stroke-width="0.7"/>
<path d="M748.4 40.8v9.6M747 44.4l1.4-1.4l1.4 1.4M747 47l1.4 1.4l1.4-1.4" stroke="#c4c4c4" stroke-width="0.7" fill="none"/>
<rect x="723.6" y="41.6" width="8.6" height="8.4" fill="#ededed" stroke="#c4c4c4" stroke-width="0.6"/><path d="M728 50v-5.4h-1.8l2.4-3l2.4 3h-1.8v5.4z" fill="#bdbdbd"/>
<rect x="702.2" y="43.2" width="9.2" height="1.6" fill="#7a7a7a"/><rect x="702.2" y="46" width="9.2" height="3" fill="#e3e3e3" stroke="#8a8a8a" stroke-width="0.6"/>
<path d="M795.6 58.4l3 5.2M800.4 58.4l-3 5.2" stroke="#666" stroke-width="0.9"/><circle cx="796" cy="65.4" r="1.5" fill="none" stroke="#e08a1e" stroke-width="1"/><circle cx="800" cy="65.4" r="1.5" fill="none" stroke="#e08a1e" stroke-width="1"/>
<path d="M782 59l7.6 7.6M789.6 59l-7.6 7.6" stroke="#e0242a" stroke-width="2.4" stroke-linecap="round"/>
<g transform="translate(769.0 58.8) scale(1.00) translate(9.4 0) scale(-1 1)"><path d="M8.8 7.8C9.8 3.6 6.6 .6 2.8 2.6" fill="none" stroke="#c4c4c4" stroke-width="2"/><path d="M0 .2L.3 5.8L5.4 4.4Z" fill="#c4c4c4"/></g>
<rect x="757" y="58.8" width="3.2" height="8.4" fill="#e9e9e9" stroke="#c9c9c9" stroke-width="0.5"/><rect x="761.4" y="58.8" width="3.2" height="8.4" fill="#e9e9e9" stroke="#c9c9c9" stroke-width="0.5"/>
<rect x="744.6" y="58.6" width="7.6" height="3" fill="#e6e6e6" stroke="#bdbdbd" stroke-width="0.6"/><path d="M748.4 61.6v3M744.6 66.6h7.6M745.6 64.6h5.6" stroke="#bdbdbd" stroke-width="0.7" fill="none"/>
<circle cx="728" cy="63" r="4" fill="#f1f1f1" stroke="#c9c9c9" stroke-width="0.8"/><path d="M726 64.6l2-3.2l2 3.2" stroke="#c9c9c9" stroke-width="0.7" fill="none"/>
<rect x="702.6" y="58.6" width="8.8" height="8.8" fill="#eef6fd" stroke="#2a8ae0" stroke-width="0.9" stroke-dasharray="1.6 1.2"/><path d="M705 65.6l2-5l2 5M705.8 64h2.4" stroke="#2a6fc4" stroke-width="0.9" fill="none"/>
<path d="M677.4 46.6l-3.6 3.8" stroke="#e59a2a" stroke-width="1.5" stroke-linecap="round"/>
<circle cx="679.4" cy="44.4" r="3.1" fill="#eef5fc" stroke="#3f74b8" stroke-width="0.9"/>
<path d="M677.9 44.4h3M679.4 42.9v3" stroke="#2c9a3a" stroke-width="1.1"/>
<path d="M665.2 46.6l-3.6 3.8" stroke="#e59a2a" stroke-width="1.5" stroke-linecap="round"/>
<circle cx="667.2" cy="44.4" r="3.1" fill="#eef5fc" stroke="#3f74b8" stroke-width="0.9"/>
<path d="M665.7 44.4h3" stroke="#d8362c" stroke-width="1.2"/>
<path d="M652.4 46.6l-3.6 3.8" stroke="#e59a2a" stroke-width="1.5" stroke-linecap="round"/>
<circle cx="654.4" cy="44.4" r="3.1" fill="#eef5fc" stroke="#3f74b8" stroke-width="0.9"/>
<path d="M653.0 45.9l1.4-3.2l1.4 3.2" stroke="#2a4fb0" stroke-width="0.9" fill="none"/>
<path d="M665.2 64.2l-3.6 3.8" stroke="#e59a2a" stroke-width="1.5" stroke-linecap="round"/>
<circle cx="667.2" cy="62.0" r="3.1" fill="#eef5fc" stroke="#3f74b8" stroke-width="0.9"/>
<path d="M665.5 62.0h3.4" stroke="#9ab6d8" stroke-width="0.6"/>
<path d="M652.4 64.2l-3.6 3.8" stroke="#e59a2a" stroke-width="1.5" stroke-linecap="round"/>
<circle cx="654.4" cy="62.0" r="3.1" fill="#eef5fc" stroke="#3f74b8" stroke-width="0.9"/>
<path d="M652.7 62.0h3.4" stroke="#9ab6d8" stroke-width="0.6"/>
<rect x="636.4" y="41.6" width="8.4" height="8" fill="#f3f3f3" stroke="#c9c9c9" stroke-width="0.7" stroke-dasharray="1.4 1"/><path d="M637.6 47.8l2.4-2.4l1.6 1.4l2.2-2.6" stroke="#d0d0d0" stroke-width="0.7" fill="none"/>
<rect x="674" y="58.8" width="8.4" height="6" fill="none" stroke="#8a8a8a" stroke-width="0.7" stroke-dasharray="1.3 1"/><path d="M677 67.6v-3.6c0-.9 1.2-.9 1.2 0v-1c0-.9 1.2-.9 1.2 0v.6c0-.8 1.2-.8 1.2 0v.8c0-.7 1.1-.7 1.1 0v2.2c0 .6-.3 1-.6 1.4" fill="#f6f6f6" stroke="#777" stroke-width="0.6"/>
<path d="M596.6 41l5 3.2" stroke="#c9c9c9" stroke-width="0.7"/><path d="M601.6 43.2h11a1 1 0 0 1 1 1v3.6a1 1 0 0 1-1 1h-11z" fill="#f7f7f7" stroke="#c9c9c9" stroke-width="0.7"/>
<path d="M575 42.4v8.4M589.6 42.4v8.4M575 44h14.6M575 44l1.8-1M575 44l1.8 1M589.6 44l-1.8-1M589.6 44l-1.8 1" stroke="#c4c4c4" stroke-width="0.7" fill="none"/>
<text x="582.3" y="41.8" font-family="Liberation Sans, sans-serif" font-size="4.6" fill="#c4c4c4" text-anchor="middle">2.0</text>
<text x="560.6" y="49.6" font-family="Liberation Sans, sans-serif" font-size="10.5" fill="#c4c4c4" text-anchor="middle" textLength="17.6" lengthAdjust="spacingAndGlyphs">Abc</text>
<path d="M541.6 43h3l1.8 1.8v4.2h-4.8z" fill="#f7f7f7" stroke="#c9c9c9" stroke-width="0.7"/>
<rect x="540.4" y="59.6" width="7" height="6" fill="#f4f4f4" stroke="#c9c9c9" stroke-width="0.7"/><path d="M540.4 61.6h7M542.6 59.6v6M544.8 61.6v4" stroke="#c9c9c9" stroke-width="0.5"/>
<path d="M508 37.4h9.6l4 4v11.4h-13.6z" fill="#f8f8f8" stroke="#c6c6c6" stroke-width="0.8"/><path d="M517.6 37.4v4h4" fill="none" stroke="#c6c6c6" stroke-width="0.7"/><rect x="508.6" y="46.4" width="12.4" height="4.6" fill="#b8b8b8"/><path d="M511.4 40.2v3M509.9 41.7h3" stroke="#bdbdbd" stroke-width="0.7"/>
<text x="514.8" y="50.2" font-family="Liberation Sans, sans-serif" font-size="3.6" font-weight="bold" fill="#f4f4f4" text-anchor="middle">BASE</text>
<path d="M480.4 39.6l3 3M483.4 39.6l-3 3M494.4 39.6l3 3M497.4 39.6l-3 3M482 41.1h14" stroke="#c4c4c4" stroke-width="0.7" fill="none"/><rect x="480" y="44.8" width="18" height="5.6" fill="#eeeeee" stroke="#c4c4c4" stroke-width="0.7"/><path d="M484.5 46v3.2M489 46v3.2M493.5 46v3.2" stroke="#c4c4c4" stroke-width="0.8"/>
<path d="M466.8 37.6v15M459 46.2h16.4" stroke="#b9b9b9" stroke-width="0.8"/><path d="M468.8 37.6v7h7" stroke="#d6d6d6" stroke-width="0.6" fill="none"/>
<rect x="421.8" y="38" width="17.6" height="14.6" fill="#f5f5f5" stroke="#cfcfcf" stroke-width="0.8"/><rect x="423" y="41.6" width="11.6" height="9.8" fill="#e2e2e2"/><path d="M435.8 38v14.6M421.8 40.6h17.6" stroke="#d8d8d8" stroke-width="0.6"/>
<rect x="381.4" y="41" width="10.6" height="11" fill="#f6f6f6" stroke="#cdcdcd" stroke-width="0.8"/><rect x="386.4" y="38" width="12" height="11" fill="none" stroke="#cdcdcd" stroke-width="0.8"/><path d="M386 36.6v3M384.8 38l1.2-1.4l1.2 1.4M394 46h3M395.8 44.8l1.2 1.2l-1.2 1.2" stroke="#cdcdcd" stroke-width="0.6" fill="none"/>
<rect x="342" y="38" width="18" height="14.6" fill="#f6f6f6" stroke="#cfcfcf" stroke-width="0.8"/><path d="M343.6 41h14.8M343.6 50l14.8-3" stroke="#cfcfcf" stroke-width="0.6" stroke-dasharray="1.4 1"/><path d="M349 49v-4.4h-1.8l2.6-3l2.6 3h-1.8v4.4z" fill="#d4d4d4" stroke="#c2c2c2" stroke-width="0.5"/>
<rect x="316" y="42.4" width="7.6" height="7" fill="#f3f3f3" stroke="#cdcdcd" stroke-width="0.7"/><path d="M318.4 42.4v7M321.2 42.4v7" stroke="#cdcdcd" stroke-width="0.6"/>
<rect x="316" y="59" width="7.6" height="7" fill="#f3f3f3" stroke="#cdcdcd" stroke-width="0.7"/><path d="M316 62.6h4M320 60.6v4" stroke="#cdcdcd" stroke-width="0.6"/>
<g fill="none" stroke-width="1.7" stroke-linejoin="round"><path d="M296.2 37.6l4.8 4l-4.8 4l-4.8-4z" stroke="#2d8ad8"/><path d="M301.4 41.2l4.8 4l-4.8 4l-4.8-4z" stroke="#d83a3a"/><path d="M296.6 44.4l4.8 4l-4.8 4l-4.8-4z" stroke="#a23ac0" transform="translate(-0.2,-0.4)"/><path d="M294 45.6l4 3.4" stroke="#2d8ad8"/></g>
<path d="M305.8 47.8l2.8 3h-1.7v2.2h-2.2v-2.2h-1.7z" fill="#1fa43a"/>
<rect x="260.6" y="37.6" width="15.4" height="13.6" fill="#fbfbfb" stroke="#8a8a8a" stroke-width="0.9" stroke-dasharray="3 1.2"/><path d="M263 41v8M265.4 43v6M268 42v7M270.4 44v5M262 49.4h10" stroke="#9a9a9a" stroke-width="0.9"/>
<rect x="270" y="46.6" width="7.4" height="5.6" fill="#e845a6"/><rect x="270" y="46.6" width="3.7" height="5.6" fill="#3f7be0"/><text x="273.7" y="51" font-family="Liberation Sans, sans-serif" font-size="3.6" font-weight="bold" fill="#fff" text-anchor="middle">IFC</text>
<rect x="226" y="37.6" width="15.6" height="13.8" fill="#f3e9dd" stroke="#8a7a6a" stroke-width="0.9"/><rect x="227.6" y="42" width="5.4" height="8" fill="#e88a2e"/><path d="M235 37.6v6h6.6M231 37.6v3" stroke="#8a7a6a" stroke-width="0.8" fill="none"/><rect x="236" y="39" width="4" height="3" fill="#fff"/>
<rect x="235.6" y="46.6" width="7.4" height="5.6" fill="#e845a6"/><rect x="235.6" y="46.6" width="3.7" height="5.6" fill="#3f7be0"/><text x="239.3" y="51" font-family="Liberation Sans, sans-serif" font-size="3.6" font-weight="bold" fill="#fff" text-anchor="middle">IFC</text>
</svg>
<!-- ===== document tab row ===== -->
<div class="abs" style="left:676.4px;top:88.2px;width:17.6px;height:12.8px;background:#d3d3d3"></div>
<div class="t f rtl" style="left:649.0px;top:90.7px;font-size:7.6px;color:#2a2a2a;transform:scaleX(0.9000)">نتایج</div>
<div class="t f " style="left:605.0px;top:91.1px;font-size:7.6px;color:#2a2a2a;transform:scaleX(0.8192)">H&amp;E</div>
<div class="t f rtl" style="left:547.4px;top:90.7px;font-size:7.6px;color:#2a2a2a;transform:scaleX(0.8675)">نتایج چاپی</div>
<div class="t f rtl" style="left:690.6px;top:90.7px;font-size:7.6px;color:#2a2a2a;transform:scaleX(0.5667)">ی</div>
<svg class="abs" style="left:0;top:85px" width="900" height="16" viewBox="0 85 900 16">
<path d="M679.4 92.6l5.2 5.2M684.6 92.6l-5.2 5.2" stroke="#444" stroke-width="0.9"/>
<path d="M665.4 90.2h4.2l1.8 1.8v7.4h-6z" fill="#fbfbfb" stroke="#9aa7b8" stroke-width="0.7"/><circle cx="667" cy="95" r="2.2" fill="#e4f0fb" stroke="#5a8ac8" stroke-width="0.8"/><path d="M665.4 96.8l-1.6 2" stroke="#e0962a" stroke-width="1.2"/>
<path d="M622.4 99.4v-6l3.6-2.8l3.6 2.8v6z" fill="#ece7df" stroke="#7a6a5a" stroke-width="0.7"/><rect x="623.6" y="94.4" width="1.8" height="5" fill="#b5462d"/><rect x="626.6" y="93.4" width="1.6" height="6" fill="#d83a2e"/>
<rect x="579.4" y="90.4" width="5.4" height="3" fill="#fff" stroke="#7a8aa0" stroke-width="0.6"/><rect x="577.4" y="93" width="9.4" height="4.6" rx="0.8" fill="#5f6f86"/><rect x="579" y="96" width="6.2" height="3" fill="#e9eef5" stroke="#7a8aa0" stroke-width="0.5"/>
<rect x="5.4" y="91" width="8" height="5.2" fill="#fdfdfd" stroke="#b9b9b9" stroke-width="0.6"/><path d="M6.6 92.6v3M8.4 92.6v3M10.2 92.6v3M12 92.6v3" stroke="#e0483a" stroke-width="0.9"/><path d="M7.4 88.4l5.4 5" stroke="#f0a020" stroke-width="1.4"/><path d="M6.4 87.6l1.4 1.2" stroke="#d0392b" stroke-width="1.2"/>
<path d="M21.2 93.2l2.2 2.2l2.2 -2.2" stroke="#444" stroke-width="0.9" fill="none"/>
</svg>
<!-- ===== left vertical strip ===== -->
<div class="abs" style="left:0;top:88px;width:2.6px;height:56.3px;background:#c6c6c6"></div>
<div class="abs" style="left:9.1px;top:132.3px;width:0;height:0;transform:rotate(-90deg);transform-origin:0 0"><div class="t f rtl" style="left:0;top:-5px;font-size:8.6px;color:#333;transform:scaleX(0.7088)">جدول داده‌ها</div></div>
<svg class="abs" style="left:0;top:130px" width="18" height="16" viewBox="0 130 18 16"><path d="M7.4 133.2h3.4M8 133.2v3.2h2.2v-3.2M9.1 136.4v1.6M7 136.4h4.2" stroke="#333" stroke-width="0.7" fill="none" transform="rotate(90 9.1 135)"/><path d="M6.8 139.3l4.6 4.6M11.4 139.3l-4.6 4.6" stroke="#333" stroke-width="0.9"/></svg>
<!-- ===== right vertical strip ===== -->
<div class="abs" style="left:897.4px;top:97px;width:2.6px;height:51px;background:#c6c6c6"></div>
<div class="abs" style="left:897.4px;top:154.6px;width:2.6px;height:41.8px;background:#c6c6c6"></div>
<div class="abs" style="left:891.1px;top:135px;width:0;height:0;transform:rotate(-90deg);transform-origin:0 0"><div class="t f rtl" style="left:0;top:-5px;font-size:8.6px;color:#333;transform:scaleX(0.6172)">مرورگر پروژه</div></div>
<div class="abs" style="left:891.1px;top:183.7px;width:0;height:0;transform:rotate(-90deg);transform-origin:0 0"><div class="t f rtl" style="left:0;top:-5px;font-size:8.6px;color:#333;transform:scaleX(0.6393)">جستجو</div></div>
<svg class="abs" style="left:884px;top:85px" width="16" height="115" viewBox="884 85 16 115">
<rect x="887.4" y="88.6" width="1.7" height="1.7" fill="#8a8a8a"/>
<rect x="890.2" y="88.6" width="1.7" height="1.7" fill="#8a8a8a"/>
<rect x="893.0" y="88.6" width="1.7" height="1.7" fill="#8a8a8a"/>
<rect x="887.4" y="91.2" width="1.7" height="1.7" fill="#8a8a8a"/>
<rect x="890.2" y="91.2" width="1.7" height="1.7" fill="#8a8a8a"/>
<rect x="893.0" y="91.2" width="1.7" height="1.7" fill="#8a8a8a"/>
<rect x="887.4" y="93.8" width="1.7" height="1.7" fill="#2a7ad8"/>
<rect x="890.2" y="93.8" width="1.7" height="1.7" fill="#2a7ad8"/>
<rect x="893.0" y="93.8" width="1.7" height="1.7" fill="#2a7ad8"/>
<circle cx="891" cy="100.3" r="1" fill="#333"/>
<path d="M889.4 136.6v3.4M889.4 137.2h3.4v2.2h-3.4M892.8 138.3h1.6" stroke="#333" stroke-width="0.7" fill="none"/>
<path d="M889.4 185.3v3.4M889.4 185.9h3.4v2.2h-3.4M892.8 187.0h1.6" stroke="#333" stroke-width="0.7" fill="none"/>
<path d="M888.6 142.6l4.8 4.8M893.4 142.6l-4.8 4.8" stroke="#333" stroke-width="0.9"/>
<path d="M888.6 191.2l4.8 4.8M893.4 191.2l-4.8 4.8" stroke="#333" stroke-width="0.9"/>
<circle cx="890.4" cy="158.4" r="2.6" fill="#e6f1fb" stroke="#4a7ec0" stroke-width="0.8"/><path d="M892.4 160.6l2.2 2.6" stroke="#e8962a" stroke-width="1.4"/>
</svg>
<!-- ===== right panel ===== -->
<div class="t f rtl" style="left:857.5px;top:89.1px;font-size:8.4px;color:#444;transform:scaleX(0.8120)">محدوده</div>
<div class="abs" style="left:717.5px;top:99.9px;width:161px;height:10.9px;background:#e2e2e2;border:1px solid #adadad"></div>
<div class="abs" style="left:701.2px;top:99.9px;width:13.3px;height:10.9px;background:#e2e2e2;border:1px solid #adadad"></div>
<div class="t f rtl" style="left:867.3px;top:100.9px;font-size:7.6px;color:#2a2a2a;transform:scaleX(0.9400)">پایه</div>
<div class="abs" style="left:717.5px;top:115px;width:161px;height:11.5px;background:#fff;border:1px solid #c3c3c3"></div>
<div class="abs" style="left:697.5px;top:130px;width:184px;height:1px;background:#e1e1e1"></div>
<div class="abs" style="left:695.1px;top:96.8px;width:187.6px;height:16.6px;border:1px solid #e3141e;border-radius:5px"></div>
<svg class="abs" style="left:697px;top:97px" width="188" height="50" viewBox="697 97 188 50">
<path d="M721.2 104.6l1.6 1.7l1.6 -1.7" stroke="#333" stroke-width="0.9" fill="none"/>
<path d="M704.2 108.4l0.8-2.6l5.4-5l1.8 1.8l-5.4 5z" fill="#f3b21a" stroke="#c9861a" stroke-width="0.5"/><path d="M710.4 100.8l1.8 1.8l0.8-0.8l-1.8-1.8z" fill="#e2603a"/><path d="M704.2 108.4l0.8-2.6l1.8 1.8z" fill="#6a4a2a"/>
<circle cx="870" cy="119.6" r="2.6" fill="#e6f1fb" stroke="#5a8fd0" stroke-width="0.9"/><path d="M872 121.6l2.4 2.6" stroke="#7a8aa0" stroke-width="1.2"/>
<path d="M734.8 116.8l2.9 3.2h-1.6v4.2h-2.6v-4.2h-1.6z" fill="#5aa0ee" stroke="#1a4fa8" stroke-width="0.8"/><path d="M723.8 124.6l2.9 -3.2h-1.6v-4.2h-2.6v4.2h-1.6z" fill="#5aa0ee" stroke="#1a4fa8" stroke-width="0.8"/>
<path d="M703.6 117.8v4M706 117.8v4M708.4 117.8v4M710.8 117.8v4" stroke="#2a72d8" stroke-width="1.5"/><path d="M702.4 122.8h9.6" stroke="#e86aa8" stroke-width="0.7"/>
<g fill="none" stroke-width="1.5" stroke-linejoin="round"><path d="M861.6 135.4l2.7 2.2l-2.7 2.2l-2.7-2.2z" stroke="#2d7ad8"/><path d="M864.6 137.4l2.7 2.2l-2.7 2.2l-2.7-2.2z" stroke="#d8343a"/><path d="M861.6 139.2l2.7 2.2l-2.7 2.2l-2.7-2.2z" stroke="#7a2ab8"/></g>
</svg>
<div class="abs" style="left:701.2px;top:133px;width:30.8px;height:11.2px;background:#e8e8e8;border:1px solid #adadad"></div>
<div class="t f rtl" style="left:704.6px;top:134.9px;font-size:7.4px;color:#2a2a2a;transform:scaleX(0.8396)">نمای کامل</div>
<div class="t f " style="left:746.4px;top:135.1px;font-size:7.4px;color:#2a2a2a;transform:scaleX(0.8711)">20201208FM_ARC_DigitalHub.ifc :Ifc</div>
<div class="car d" style="left:873.1px;top:137.2px"></div>
<div class="car d" style="left:861.7px;top:150.2px"></div>
<div class="cb" style="left:847.7px;top:148.6px"></div>
<div class="t f " style="left:797.4px;top:148.6px;font-size:7.6px;color:#2a2a2a;transform:scaleX(0.8397)">۰I_۲۰۱۸&nbsp; Project</div>
<div class="car d" style="left:850.6px;top:162.0px"></div>
<div class="cb" style="left:836.5px;top:160.4px"></div>
<div class="t f rtl" style="left:782.5px;top:160.5px;font-size:7.6px;color:#2a2a2a;transform:scaleX(0.8932)">موقعیت&nbsp; Default</div>
<div class="cb" style="left:825.3px;top:172.3px"></div>
<div class="t f rtl" style="left:771.4px;top:172.3px;font-size:7.6px;color:#2a2a2a;transform:scaleX(0.8914)">موقعیت&nbsp; Default</div>
<div class="car d" style="left:839.3px;top:185.7px"></div>
<div class="cb" style="left:825.3px;top:184.1px"></div>
<div class="t f rtl" style="left:796.3px;top:184.1px;font-size:7.6px;color:#2a2a2a;transform:scaleX(0.8103)">ساختمان</div>
<div class="car r" style="left:829.3px;top:198.3px"></div>
<div class="cb" style="left:814.2px;top:195.9px"></div>
<div class="t f rtl" style="left:759.0px;top:196.0px;font-size:7.6px;color:#2a2a2a;transform:scaleX(0.8277)">طبقه&nbsp; OKRD_B01</div>
<div class="car d" style="left:828.2px;top:209.4px"></div>
<div class="cb" style="left:814.2px;top:207.8px"></div>
<div class="t f rtl" style="left:759.0px;top:207.8px;font-size:7.6px;color:#2a2a2a;transform:scaleX(0.8277)">طبقه&nbsp; OKRD_E00</div>
<div class="car r" style="left:818.1px;top:222.0px"></div>
<div class="cb" style="left:803.0px;top:219.6px"></div>
<div class="t f rtl" style="left:775.8px;top:219.6px;font-size:7.6px;color:#2a2a2a;transform:scaleX(0.8563);font-style:italic;color:#333">* Space</div>
<div class="car r" style="left:818.1px;top:233.8px"></div>
<div class="cb" style="left:803.0px;top:231.4px"></div>
<div class="t f rtl" style="left:777.7px;top:231.5px;font-size:7.6px;color:#2a2a2a;transform:scaleX(0.9056);font-style:italic;color:#333">* اسلب</div>
<div class="car r" style="left:818.1px;top:245.6px"></div>
<div class="cb" style="left:803.0px;top:243.2px"></div>
<div class="t f rtl" style="left:785.5px;top:243.3px;font-size:7.6px;color:#2a2a2a;transform:scaleX(0.9305);font-style:italic;color:#333">* پله</div>
<div class="car r" style="left:818.1px;top:257.5px"></div>
<div class="cb" style="left:803.0px;top:255.1px"></div>
<div class="t f rtl" style="left:780.0px;top:255.1px;font-size:7.6px;color:#2a2a2a;transform:scaleX(0.8425);font-style:italic;color:#333">* پنجره</div>
<div class="car r" style="left:818.1px;top:269.3px"></div>
<div class="cb" style="left:803.0px;top:266.9px"></div>
<div class="t f rtl" style="left:785.5px;top:266.9px;font-size:7.6px;color:#2a2a2a;transform:scaleX(1.0017);font-style:italic;color:#333">* تیر</div>
<div class="car r" style="left:818.1px;top:281.1px"></div>
<div class="cb" style="left:803.0px;top:278.7px"></div>
<div class="t f rtl" style="left:788.1px;top:278.8px;font-size:7.6px;color:#2a2a2a;transform:scaleX(0.8693);font-style:italic;color:#333">* در</div>
<div class="car r" style="left:818.1px;top:293.0px"></div>
<div class="cb" style="left:803.0px;top:290.6px"></div>
<div class="t f rtl" style="left:701.6px;top:290.6px;font-size:7.6px;color:#2a2a2a;transform:scaleX(0.8262)">دیوار&nbsp;&nbsp; <span dir="ltr">2542860:Fassade:Standard</span></div>
<div class="car r" style="left:818.1px;top:304.8px"></div>
<div class="cb" style="left:803.0px;top:302.4px"></div>
<div class="t f rtl" style="left:778.8px;top:302.4px;font-size:7.6px;color:#2a2a2a;transform:scaleX(0.9861);font-style:italic;color:#333">* دیوار</div>
<div class="car r" style="left:818.1px;top:316.6px"></div>
<div class="cb" style="left:803.0px;top:314.2px"></div>
<div class="t f rtl" style="left:777.7px;top:314.3px;font-size:7.6px;color:#2a2a2a;transform:scaleX(0.9056);font-style:italic;color:#333">* ستون</div>
<div class="car r" style="left:818.1px;top:328.5px"></div>
<div class="cb" style="left:803.0px;top:326.1px"></div>
<div class="t f rtl" style="left:769.5px;top:326.1px;font-size:7.6px;color:#2a2a2a;transform:scaleX(0.9072);font-style:italic;color:#333">* کف‌پوش</div>
<div class="car r" style="left:818.1px;top:340.3px"></div>
<div class="cb" style="left:803.0px;top:337.9px"></div>
<div class="t f rtl" style="left:733.3px;top:337.9px;font-size:7.6px;color:#2a2a2a;transform:scaleX(0.9032);font-style:italic;color:#333">* نماینده المان ساختمان</div>
<div class="car r" style="left:829.3px;top:352.1px"></div>
<div class="cb" style="left:814.2px;top:349.7px"></div>
<div class="t f rtl" style="left:759.0px;top:349.8px;font-size:7.6px;color:#2a2a2a;transform:scaleX(0.8277)">طبقه&nbsp; OKRD_E01</div>
<!-- ===== bottom sheet tabs ===== -->
<div class="abs" style="left:633.4px;top:429px;width:22px;height:12px;background:#fafafa"></div>
<div class="t f rtl" style="left:31.7px;top:430.8px;font-size:7.4px;color:#2a2a2a;transform:scaleX(0.9234)">چاپ خروجی</div>
<div class="t f rtl" style="left:77.7px;top:430.8px;font-size:7.4px;color:#2a2a2a;transform:scaleX(0.9576)">سیستم های خشک</div>
<div class="t f rtl" style="left:141.6px;top:430.8px;font-size:7.4px;color:#2a2a2a;transform:scaleX(0.8965)">نقشه های مدار-سقف</div>
<div class="t f rtl" style="left:211.6px;top:430.8px;font-size:7.4px;color:#2a2a2a;transform:scaleX(0.9336)">سیستم تابشی-سقف‌ها</div>
<div class="t f rtl" style="left:286.1px;top:430.8px;font-size:7.4px;color:#2a2a2a;transform:scaleX(0.9145)">نقشه های مدار - کف</div>
<div class="t f rtl" style="left:356.0px;top:430.8px;font-size:7.4px;color:#2a2a2a;transform:scaleX(0.9322)">سیستم های تابشی - کف‌ها، دیوارها</div>
<div class="t f rtl" style="left:463.7px;top:430.8px;font-size:7.4px;color:#2a2a2a;transform:scaleX(0.9288)">سیستم های همرفتی</div>
<div class="t f " style="left:533.3px;top:430.8px;font-size:7.4px;color:#2a2a2a;transform:scaleX(0.8521)">H&amp;E (V)</div>
<div class="t f " style="left:571.4px;top:430.8px;font-size:7.4px;color:#2a2a2a;transform:scaleX(0.8238)">H&amp;E(T)</div>
<div class="t f rtl" style="left:606.1px;top:430.8px;font-size:7.4px;color:#2a2a2a;transform:scaleX(0.8684)">ساخت</div>
<div class="t f rtl" style="left:637.3px;top:430.8px;font-size:7.4px;color:#2a2a2a;transform:scaleX(0.8400);font-weight:bold">پایه</div>
<svg class="abs" style="left:18px;top:429px" width="676" height="12" viewBox="18 429 676 12">
<path d="M21.8 434l2.2 2.2l2.2-2.2" stroke="#444" stroke-width="0.9" fill="none"/>
<path d="M27.4 429.6l3 11" stroke="#cdcdcd" stroke-width="0.7"/>
<path d="M69.3 431.7c-1.1 0-1.7 .8-1.7 1.7c0 .7 .4 1.1 .8 1.6v.8h1.8v-.8c.4-.5 .8-.9 .8-1.6c0-.9-.6-1.7-1.7-1.7z" fill="#f9c520" stroke="#dba21a" stroke-width="0.35"/><rect x="68.5" y="436.0" width="1.6" height="1.1" fill="#a8a8a8"/><path d="M72.5 429.6l2.2 11" stroke="#cdcdcd" stroke-width="0.7"/><path d="M129.7 432.4l5 5M134.7 432.4l-5 5" stroke="#e0242a" stroke-width="1.9" stroke-linecap="round"/><path d="M136.4 429.6l2.2 11" stroke="#cdcdcd" stroke-width="0.7"/><path d="M200.5 432.4l5 5M205.5 432.4l-5 5" stroke="#e0242a" stroke-width="1.9" stroke-linecap="round"/><path d="M206.6 429.6l2.2 11" stroke="#cdcdcd" stroke-width="0.7"/><path d="M277.4 431.7c-1.1 0-1.7 .8-1.7 1.7c0 .7 .4 1.1 .8 1.6v.8h1.8v-.8c.4-.5 .8-.9 .8-1.6c0-.9-.6-1.7-1.7-1.7z" fill="#f9c520" stroke="#dba21a" stroke-width="0.35"/><rect x="276.6" y="436.0" width="1.6" height="1.1" fill="#a8a8a8"/><path d="M280.9 429.6l2.2 11" stroke="#cdcdcd" stroke-width="0.7"/><path d="M344.3 432.4l5 5M349.3 432.4l-5 5" stroke="#e0242a" stroke-width="1.9" stroke-linecap="round"/><path d="M350.8 429.6l2.2 11" stroke="#cdcdcd" stroke-width="0.7"/><path d="M454.3 431.7c-1.1 0-1.7 .8-1.7 1.7c0 .7 .4 1.1 .8 1.6v.8h1.8v-.8c.4-.5 .8-.9 .8-1.6c0-.9-.6-1.7-1.7-1.7z" fill="#f9c520" stroke="#dba21a" stroke-width="0.35"/><rect x="453.5" y="436.0" width="1.6" height="1.1" fill="#a8a8a8"/><path d="M457.3 429.6l2.2 11" stroke="#cdcdcd" stroke-width="0.7"/><path d="M523.8 431.7c-1.1 0-1.7 .8-1.7 1.7c0 .7 .4 1.1 .8 1.6v.8h1.8v-.8c.4-.5 .8-.9 .8-1.6c0-.9-.6-1.7-1.7-1.7z" fill="#f9c520" stroke="#dba21a" stroke-width="0.35"/><rect x="523.0" y="436.0" width="1.6" height="1.1" fill="#a8a8a8"/><path d="M527.6 429.6l2.2 11" stroke="#cdcdcd" stroke-width="0.7"/><path d="M558.8 432.4l5 5M563.8 432.4l-5 5" stroke="#e0242a" stroke-width="1.9" stroke-linecap="round"/><path d="M565.7 429.6l2.2 11" stroke="#cdcdcd" stroke-width="0.7"/><path d="M594.1 432.4l5 5M599.1 432.4l-5 5" stroke="#e0242a" stroke-width="1.9" stroke-linecap="round"/><path d="M600.4 429.6l2.2 11" stroke="#cdcdcd" stroke-width="0.7"/><path d="M627.8 431.7c-1.1 0-1.7 .8-1.7 1.7c0 .7 .4 1.1 .8 1.6v.8h1.8v-.8c.4-.5 .8-.9 .8-1.6c0-.9-.6-1.7-1.7-1.7z" fill="#f9c520" stroke="#dba21a" stroke-width="0.35"/><rect x="627.0" y="436.0" width="1.6" height="1.1" fill="#a8a8a8"/><path d="M631.6 429.6l2.2 11" stroke="#cdcdcd" stroke-width="0.7"/><path d="M650.0 431.7c-1.1 0-1.7 .8-1.7 1.7c0 .7 .4 1.1 .8 1.6v.8h1.8v-.8c.4-.5 .8-.9 .8-1.6c0-.9-.6-1.7-1.7-1.7z" fill="#f9c520" stroke="#dba21a" stroke-width="0.35"/><rect x="649.2" y="436.0" width="1.6" height="1.1" fill="#a8a8a8"/><path d="M654.0 429.6l2.2 11" stroke="#cdcdcd" stroke-width="0.7"/>
</svg>
<!-- ===== status bar ===== -->
<svg class="abs" style="left:18px;top:441px" width="676" height="12" viewBox="18 441 676 12"><path d="M26.2 445.8l2.2 2.2l2.2-2.2" stroke="#fff" stroke-width="0.9" fill="none"/></svg>
<div class="t f " style="left:38.9px;top:442.9px;font-size:7.2px;color:#5d9fe2;transform:scaleX(0.7239)">REP</div>
<div class="t f " style="left:56.0px;top:442.9px;font-size:7.2px;color:#fff;transform:scaleX(0.8113)">AUTO</div>
<div class="t f " style="left:79.5px;top:442.9px;font-size:7.2px;color:#5d9fe2;transform:scaleX(0.7958)">GRID</div>
<div class="t f rtl" style="left:100.0px;top:442.9px;font-size:7.2px;color:#5d9fe2;transform:scaleX(0.8500)">قفل</div>
<div class="t f " style="left:117.3px;top:442.9px;font-size:7.2px;color:#fff;transform:scaleX(0.7750)">ORTO</div>
<div class="abs" style="left:51.8px;top:443.6px;width:0.9px;height:6.6px;background:#e8f1fb"></div>
<div class="abs" style="left:74.8px;top:443.6px;width:0.9px;height:6.6px;background:#e8f1fb"></div>
<div class="abs" style="left:96.0px;top:443.6px;width:0.9px;height:6.6px;background:#e8f1fb"></div>
<div class="abs" style="left:113.1px;top:443.6px;width:0.9px;height:6.6px;background:#e8f1fb"></div>
<div class="t f " style="left:643.7px;top:442.6px;font-size:7.6px;color:#cfe3f8;transform:scaleX(0.9555)">۲۳/۵۸۵- ;۳۱/۵۸۳</div>
<!-- ===== taskbar ===== -->
<svg class="abs" style="left:0;top:457px" width="900" height="26" viewBox="0 457 900 26">
<rect x="302.4" y="464.2" width="6.8" height="5.9" rx="0.6" fill="#1f8fe6"/>
<rect x="302.4" y="470.7" width="6.8" height="5.9" rx="0.6" fill="#1f8fe6"/>
<rect x="309.8" y="464.2" width="6.8" height="5.9" rx="0.6" fill="#1f8fe6"/>
<rect x="309.8" y="470.7" width="6.8" height="5.9" rx="0.6" fill="#1f8fe6"/>
<rect x="324.5" y="462.4" width="54.4" height="16" rx="8" fill="#f4f7fc" stroke="#d9e0ea" stroke-width="0.6"/>
<circle cx="340.4" cy="469.8" r="2.4" fill="none" stroke="#333" stroke-width="0.9"/><path d="M338.8 471.6l-1.8 2" stroke="#333" stroke-width="0.9"/>
<rect x="389.6" y="464.8" width="10" height="8.6" rx="1" fill="#f6f6f6" stroke="#cfd4dc" stroke-width="0.5"/><rect x="386.8" y="467.6" width="9.6" height="8.4" rx="1" fill="#2b2b2b"/>
<rect x="416" y="464.4" width="9.8" height="11.4" rx="1.2" fill="#2b88d8"/><rect x="417" y="469" width="8.8" height="6.8" rx="1" fill="#55a8ee"/><rect x="411" y="466.4" width="8.6" height="8.4" rx="1" fill="#0f62b8"/><circle cx="415.3" cy="470.6" r="2.1" fill="none" stroke="#fff" stroke-width="1.1"/>
<circle cx="442.9" cy="470.3" r="7" fill="#e33b2e"/><path d="M442.9 470.3L436.9 466.8A7 7 0 0 0 439.5 476.4Z" fill="#2ca24a"/><path d="M442.9 470.3L439.5 476.4A7 7 0 0 0 449.9 470.3Z" fill="#f7c31a"/><path d="M442.9 470.3H449.9A7 7 0 0 0 448.8 466.6L442.9 466.9Z" fill="#e33b2e"/><circle cx="442.9" cy="470.3" r="3.3" fill="#fff"/><circle cx="442.9" cy="470.3" r="2.6" fill="#3a7fe6"/>
<path d="M460.7 465.2h4.6l1.4 1.6h8.9v2h-14.9z" fill="#e9a81a"/><rect x="460.7" y="467.2" width="14.9" height="8.6" rx="0.8" fill="#f8cf42"/><rect x="464.6" y="472.8" width="7" height="3" fill="#3d8fe0"/>
<circle cx="492.7" cy="470.3" r="7" fill="#1b7fd2"/><path d="M486 472.6a7 7 0 0 0 12.6 1.6c-3 1.6-7 .2-7.6-3.2c-.4-2.4 1.6-4.6 4.2-4.2c2 .3 3.6 1.8 4.4 3.6a7 7 0 0 0-13.8-.8z" fill="#45d07a" opacity="0.85"/><path d="M489.4 472a4 3.6 0 0 1 6.4-3.8c1.6 1 1.8 2.8 1.2 3.8c-.6 1-2.6 1-3.4 .6c1.4 2 4 1.6 5.2 .4" fill="none" stroke="#e8f6ff" stroke-width="1.2"/>
<path d="M513.4 476V469L518 465l4.6 4" stroke="#5aaeea" stroke-width="1.5" fill="none" stroke-linecap="round" stroke-linejoin="round"/><path d="M518 476h-4.4" stroke="#5aaeea" stroke-width="1.5"/><rect x="518.4" y="470.6" width="4.6" height="5.6" fill="#8cc6f2"/><path d="M519.4 472h2.6M519.4 474h2.6" stroke="#fff" stroke-width="0.8"/>
<rect x="531.8" y="460" width="21.4" height="21" rx="2.4" fill="#f3f7fc" stroke="#dfe5ee" stroke-width="0.5"/>
<path d="M537.6 476V468.6L542.6 464.2l5 4.4" stroke="#1c7fd6" stroke-width="1.7" fill="none" stroke-linecap="round" stroke-linejoin="round"/><path d="M542.4 476h-4.6" stroke="#1c7fd6" stroke-width="1.7"/><rect x="543" y="470.4" width="5" height="5.8" fill="#3a94e2"/><path d="M544 471.8h3M544 473.8h3" stroke="#fff" stroke-width="0.8"/>
<rect x="537.8" y="479" width="9" height="1.4" rx="0.7" fill="#1b78d0"/>
<rect x="563.6" y="463.8" width="10.8" height="12.8" rx="1" fill="#1e9e5a"/><rect x="563.6" y="470.2" width="10.8" height="6.4" fill="#147a44"/><rect x="569" y="463.8" width="5.4" height="6.4" fill="#3cc47c"/><rect x="559.2" y="466" width="8.6" height="8.6" rx="1" fill="#0f6e3c"/><path d="M561.6 468.2l3.8 4.2M565.4 468.2l-3.8 4.2" stroke="#fff" stroke-width="1.1"/>
<rect x="586.4" y="463.6" width="10.4" height="11" fill="#fbfbfb" stroke="#6a6f7a" stroke-width="0.8"/><path d="M588 466h7M588 468h7M588 470h4" stroke="#3d6fc0" stroke-width="0.8"/><path d="M590 475.2l7-7.4" stroke="#c0392b" stroke-width="1.4"/><rect x="586.4" y="473.4" width="10.4" height="2.6" fill="#2b2b2b"/>
<rect x="417.1" y="479.4" width="2.6" height="1" rx="0.5" fill="#7d858f"/>
<rect x="441.6" y="479.4" width="2.6" height="1" rx="0.5" fill="#7d858f"/>
<rect x="466.9" y="479.4" width="2.6" height="1" rx="0.5" fill="#7d858f"/>
<rect x="491.4" y="479.4" width="2.6" height="1" rx="0.5" fill="#7d858f"/>
<rect x="516.5" y="479.4" width="2.6" height="1" rx="0.5" fill="#7d858f"/>
<rect x="565.9" y="479.4" width="2.6" height="1" rx="0.5" fill="#7d858f"/>
<rect x="590.3" y="479.4" width="2.6" height="1" rx="0.5" fill="#7d858f"/>
<path d="M789.4 471.8l3.4-3.4l3.4 3.4" stroke="#333" stroke-width="0.9" fill="none"/>
<rect x="828.8" y="465.8" width="7.4" height="5.6" rx="0.6" fill="none" stroke="#333" stroke-width="0.8"/><path d="M830.4 473.8h4.2M832.5 471.4v2.4" stroke="#333" stroke-width="0.8"/><circle cx="836.4" cy="466" r="1.3" fill="#e4ebf4" stroke="#333" stroke-width="0.6"/>
<path d="M842.6 469h1.8l2.4-2.2v7l-2.4-2.2h-1.8z" fill="none" stroke="#333" stroke-width="0.8" stroke-linejoin="round"/><path d="M848.4 468.2a3 3 0 0 1 0 4.4M850 466.8a5 5 0 0 1 0 7.2" stroke="#333" stroke-width="0.7" fill="none"/>
</svg>
<div class="t f " style="left:346.9px;top:465.9px;font-size:7.6px;color:#333;transform:scaleX(0.8436)">Search</div>
<div class="t f " style="left:805.1px;top:466.3px;font-size:7.2px;color:#222;transform:scaleX(0.8473)">ENG</div>
<div class="t f rtl" style="left:862.4px;top:461.6px;font-size:7.2px;color:#222;transform:scaleX(0.8091)">۱۰:۳۸ ق.ظ</div>
<div class="t f " style="left:859.6px;top:470.6px;font-size:7.2px;color:#222;transform:scaleX(0.8194)">۱۴۰۲/۰۲/۲۴</div>
</body>
</html>
